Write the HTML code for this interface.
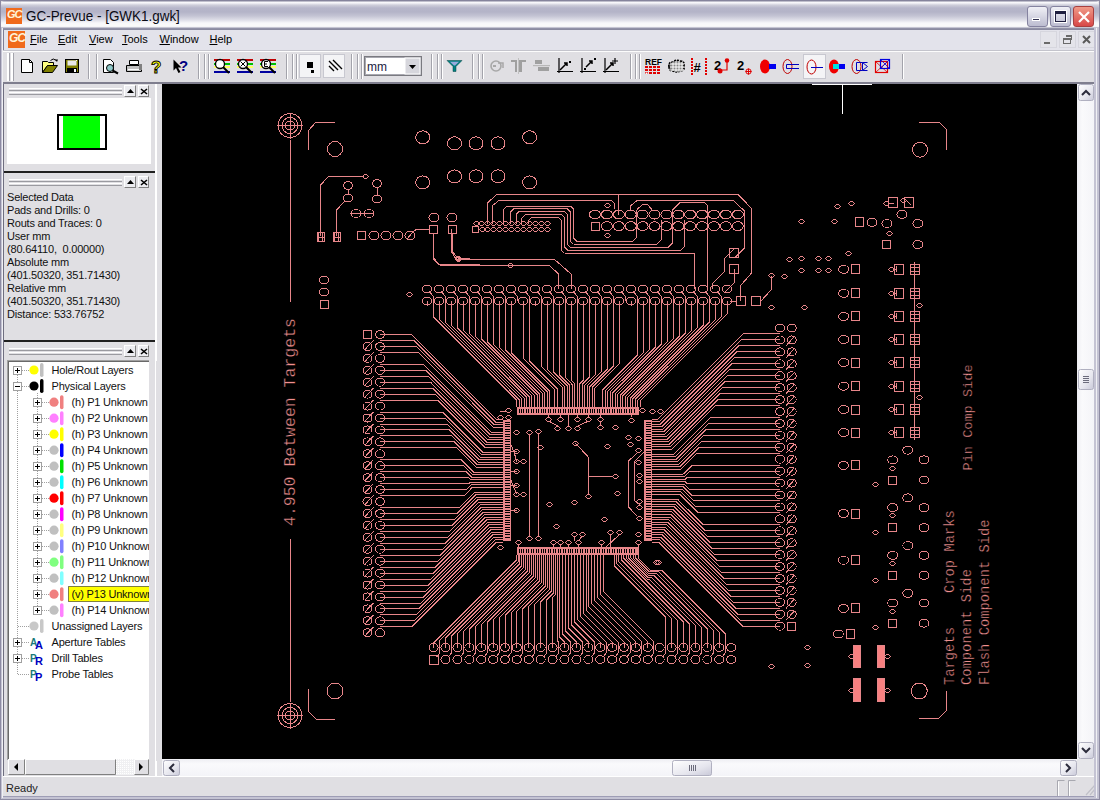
<!DOCTYPE html><html><head><meta charset="utf-8"><style>
*{margin:0;padding:0;box-sizing:border-box}
html,body{width:1100px;height:800px;overflow:hidden;background:#e0dfe3;font-family:"Liberation Sans",sans-serif;font-size:12px;color:#000;position:relative}
.a{position:absolute}
.t{position:absolute;white-space:nowrap;line-height:1}
</style></head><body>
<div class="a" style="left:0;top:0;width:1100px;height:800px;background:#8d8ba3"></div>
<div class="a" style="left:1px;top:1px;width:1098px;height:798px;background:#e0dfe3"></div>
<div class="a" style="left:0;top:0;width:1100px;height:30px;border-radius:7px 7px 0 0;background:linear-gradient(#85849c 0px,#85849c 1px,#fbfbfd 2px,#f4f4f8 3px,#cfcfdb 5px,#b6b6ca 8px,#b4b4c8 12px,#c4c4d4 16px,#dedee8 20px,#f8f8fa 23px,#fafafa 26px,#f0f0f4 27px,#9a9ab0 28px,#8a8aa0 29px,#8a8aa0 30px)"></div>
<div class="a" style="left:6px;top:8px;width:16px;height:16px;background:#f06a1c"><div class="t" style="left:1px;top:1px;font-weight:bold;font-style:italic;font-size:11px;color:#fff3d8;letter-spacing:-1px">GC</div></div>
<div class="t" style="left:26px;top:9px;font-size:14px;color:#0a0a14;transform:scaleX(0.96);transform-origin:0 0">GC-Prevue - [GWK1.gwk]</div>
<div class="a" style="left:1027px;top:6px;width:21px;height:21px;border:1px solid #8583a0;border-radius:3px;background:linear-gradient(#f0f0f6,#bcbcd0)"><div class="a" style="left:4px;top:11px;width:8px;height:3px;background:#303050;border:1px solid #fff"></div></div>
<div class="a" style="left:1050px;top:6px;width:21px;height:21px;border:1px solid #8583a0;border-radius:3px;background:linear-gradient(#f0f0f6,#bcbcd0)"><div class="a" style="left:4px;top:4px;width:11px;height:11px;border:1px solid #202040;border-top-width:3px;box-shadow:0 0 0 1px #fff"></div></div>
<div class="a" style="left:1073px;top:6px;width:21px;height:21px;border:1px solid #a84040;border-radius:3px;background:linear-gradient(#f09a88,#d84848)"><svg class="a" style="left:3px;top:3px" width="14" height="14"><path d="M2 2L12 12M12 2L2 12" stroke="#fff" stroke-width="2.2"/></svg></div>
<div class="a" style="left:3px;top:30px;width:1094px;height:21px;background:#e3e3eb;border-left:1px solid #7f7e96"></div>
<div class="a" style="left:3px;top:50px;width:1094px;height:1px;background:#c4c4cc"></div>
<div class="a" style="left:8px;top:31px;width:17px;height:17px;background:#f06a1c"><div class="t" style="left:1px;top:1px;font-weight:bold;font-style:italic;font-size:12px;color:#fff3d8;letter-spacing:-1px">GC</div></div>
<div class="t" style="left:30px;top:34px;font-size:11px;color:#000"><u>F</u>ile</div>
<div class="t" style="left:58px;top:34px;font-size:11px;color:#000"><u>E</u>dit</div>
<div class="t" style="left:89px;top:34px;font-size:11px;color:#000"><u>V</u>iew</div>
<div class="t" style="left:122px;top:34px;font-size:11px;color:#000"><u>T</u>ools</div>
<div class="t" style="left:159.5px;top:34px;font-size:11px;color:#000"><u>W</u>indow</div>
<div class="t" style="left:209.5px;top:34px;font-size:11px;color:#000"><u>H</u>elp</div>
<div class="a" style="left:1040px;top:31px;width:17px;height:17px;background:#e4e4ea;border:1px solid #d6d6de"></div>
<div class="a" style="left:1059px;top:31px;width:17px;height:17px;background:#e4e4ea;border:1px solid #d6d6de"></div>
<div class="a" style="left:1078px;top:31px;width:17px;height:17px;background:#e4e4ea;border:1px solid #d6d6de"></div>
<div class="a" style="left:1044px;top:42px;width:6px;height:2px;background:#6a6a6a"></div>
<div class="a" style="left:1063px;top:38px;width:8px;height:6px;border:1px solid #6a6a6a;border-top-width:2px"></div>
<div class="a" style="left:1066px;top:35px;width:6px;height:5px;border-top:2px solid #6a6a6a;border-right:1px solid #6a6a6a"></div>
<svg class="a" style="left:1082px;top:35px" width="10" height="10"><path d="M1 1L8 8M8 1L1 8" stroke="#5a5a5a" stroke-width="2"/></svg>
<div class="a" style="left:3px;top:51px;width:1094px;height:1px;background:#fcfcfc"></div>
<div class="a" style="left:3px;top:52px;width:1094px;height:31px;background:#e0dfe3"></div>
<div class="a" style="left:3px;top:82px;width:1094px;height:2px;background:#7f7e8e"></div>
<svg class="a" style="left:0;top:0" width="1100" height="84" viewBox="0 0 1100 84"><rect x="7" y="53" width="2" height="28" fill="#fff"/><rect x="9" y="53" width="1" height="28" fill="#a3a3ab"/><rect x="11" y="53" width="2" height="28" fill="#fff"/><rect x="13" y="53" width="1" height="28" fill="#a3a3ab"/><rect x="88" y="54" width="1" height="25" fill="#a3a3ab"/><rect x="89" y="54" width="1" height="25" fill="#ffffff"/><rect x="198" y="54" width="1" height="25" fill="#a3a3ab"/><rect x="199" y="54" width="1" height="25" fill="#ffffff"/><rect x="286" y="54" width="1" height="25" fill="#a3a3ab"/><rect x="287" y="54" width="1" height="25" fill="#ffffff"/><rect x="351" y="54" width="1" height="25" fill="#a3a3ab"/><rect x="352" y="54" width="1" height="25" fill="#ffffff"/><rect x="431" y="54" width="1" height="25" fill="#a3a3ab"/><rect x="432" y="54" width="1" height="25" fill="#ffffff"/><rect x="472" y="54" width="1" height="25" fill="#a3a3ab"/><rect x="473" y="54" width="1" height="25" fill="#ffffff"/><rect x="630" y="54" width="1" height="25" fill="#a3a3ab"/><rect x="631" y="54" width="1" height="25" fill="#ffffff"/><rect x="902" y="54" width="1" height="25" fill="#a3a3ab"/><rect x="903" y="54" width="1" height="25" fill="#ffffff"/><rect x="96" y="54" width="1" height="25" fill="#a3a3ab"/><rect x="97" y="54" width="1" height="25" fill="#ffffff"/><rect x="204" y="54" width="1" height="25" fill="#a3a3ab"/><rect x="205" y="54" width="1" height="25" fill="#ffffff"/><rect x="208" y="54" width="1" height="25" fill="#a3a3ab"/><rect x="209" y="54" width="1" height="25" fill="#ffffff"/><rect x="292" y="54" width="1" height="25" fill="#a3a3ab"/><rect x="293" y="54" width="1" height="25" fill="#ffffff"/><rect x="296" y="54" width="1" height="25" fill="#a3a3ab"/><rect x="297" y="54" width="1" height="25" fill="#ffffff"/><rect x="357" y="54" width="1" height="25" fill="#a3a3ab"/><rect x="358" y="54" width="1" height="25" fill="#ffffff"/><rect x="361" y="54" width="1" height="25" fill="#a3a3ab"/><rect x="362" y="54" width="1" height="25" fill="#ffffff"/><rect x="437" y="54" width="1" height="25" fill="#a3a3ab"/><rect x="438" y="54" width="1" height="25" fill="#ffffff"/><rect x="441" y="54" width="1" height="25" fill="#a3a3ab"/><rect x="442" y="54" width="1" height="25" fill="#ffffff"/><rect x="478" y="54" width="1" height="25" fill="#a3a3ab"/><rect x="479" y="54" width="1" height="25" fill="#ffffff"/><rect x="482" y="54" width="1" height="25" fill="#a3a3ab"/><rect x="483" y="54" width="1" height="25" fill="#ffffff"/><rect x="635" y="54" width="1" height="25" fill="#a3a3ab"/><rect x="636" y="54" width="1" height="25" fill="#ffffff"/><rect x="639" y="54" width="1" height="25" fill="#a3a3ab"/><rect x="640" y="54" width="1" height="25" fill="#ffffff"/><path d="M21.5 59.5H29.5L32.5 62.5V72.5H21.5Z" fill="#fff" stroke="#000"/><path d="M29.5 59.5V62.5H32.5" fill="none" stroke="#000"/><path d="M42.5 61.5H47.5L48.5 62.5H53.5V65.5H47.5L42.5 72.5Z" fill="#ffff80" stroke="#000"/><path d="M42.5 72.5L47.5 65.5H57.5L52.5 72.5Z" fill="#808000" stroke="#000"/><path d="M50.5 60.5Q53 57.5 56.5 60.5" fill="none" stroke="#000"/><path d="M55 59.5H58L57 62Z" fill="#000"/><rect x="65.5" y="59.5" width="13" height="13" fill="#808000" stroke="#000"/><rect x="67.5" y="60.5" width="9" height="5" fill="#e8e8e8"/><rect x="76" y="60" width="1" height="1" fill="#fff"/><rect x="67" y="68" width="10" height="4.5" fill="#000"/><rect x="74" y="69" width="2" height="3" fill="#fff"/><path d="M103.5 59.5H110.5L113.5 62.5V72.5H103.5Z" fill="#fff" stroke="#000"/><circle cx="110" cy="68" r="3.5" fill="#8fc8c8" stroke="#000"/><path d="M112.5 70.5L118 73.5" stroke="#000" stroke-width="2"/><path d="M129.5 60.5H138.5V64.5H129.5Z" fill="#fff" stroke="#000"/><path d="M126.5 65.5H141.5V71.5H126.5Z" fill="#c0c0c0" stroke="#000"/><rect x="128" y="69" width="12" height="1.2" fill="#fff"/><rect x="139" y="64" width="3" height="6" fill="#808080"/><text x="151" y="73" font-family="Liberation Sans" font-weight="bold" font-size="17" fill="#ffff00" stroke="#000" stroke-width="0.9">?</text><path d="M173.5 59.5V70.5L176 68L178.5 73L180.5 72L178 67.5H181.5Z" fill="#000"/><text x="179" y="71" font-family="Liberation Sans" font-weight="bold" font-size="15" fill="#000080">?</text><rect x="214" y="59" width="16" height="2" fill="#c00000"/><rect x="214" y="63" width="16" height="2" fill="#00c000"/><rect x="214" y="66" width="16" height="2" fill="#ffff60"/><rect x="214" y="71" width="16" height="2" fill="#0000a0"/><circle cx="220" cy="64" r="4.5" fill="#fff" stroke="#000" stroke-width="1.3"/><path d="M223 67L229 73" stroke="#000" stroke-width="2"/><rect x="237" y="59" width="16" height="2" fill="#c00000"/><rect x="237" y="63" width="16" height="2" fill="#00c000"/><rect x="237" y="66" width="16" height="2" fill="#ffff60"/><rect x="237" y="71" width="16" height="2" fill="#0000a0"/><circle cx="243" cy="64" r="4.5" fill="#fff" stroke="#000" stroke-width="1.3"/><path d="M246 67L252 73" stroke="#000" stroke-width="2"/><path d="M240.5 61.5L245.5 66.5M245.5 61.5L240.5 66.5" stroke="#000"/><rect x="260" y="59" width="16" height="2" fill="#c00000"/><rect x="260" y="63" width="16" height="2" fill="#00c000"/><rect x="260" y="66" width="16" height="2" fill="#ffff60"/><rect x="260" y="71" width="16" height="2" fill="#0000a0"/><circle cx="266" cy="64" r="4.5" fill="#fff" stroke="#000" stroke-width="1.3"/><path d="M269 67L275 73" stroke="#000" stroke-width="2"/><path d="M268 61.5H264.5V66.5H268M264.5 64H267" fill="none" stroke="#000"/><rect x="299.5" y="54.5" width="21" height="23" fill="#f4f4f6" stroke="#c8c8d0"/><rect x="323.5" y="54.5" width="21" height="23" fill="#f4f4f6" stroke="#c8c8d0"/><rect x="307" y="62" width="6" height="6" fill="#000"/><rect x="311" y="70" width="3" height="3" fill="#000"/><path d="M329 61L338 70M329 66L334 71M333 60L342 69" stroke="#000" stroke-width="1.4"/><rect x="364.5" y="56.5" width="57" height="19" fill="#fff" stroke="#7a7a80"/><rect x="365.5" y="57.5" width="55" height="17" fill="none" stroke="#a8a8b0"/><rect x="405" y="58" width="15" height="16" fill="#d6d6dc" stroke="#fff"/><path d="M409 65H416L412.5 69Z" fill="#000"/><text x="367" y="70.5" font-family="Liberation Sans" font-size="12" fill="#1a1a40">mm</text><path d="M447 60.5H462L456 66.5V71.5H453V66.5Z" fill="#008080" stroke="#004040" stroke-width="0.5"/><path d="M450 61.8H459L455 65.5H454Z" fill="#9ad"/><circle cx="496" cy="66" r="5" fill="none" stroke="#a8a8a8" stroke-width="1.6"/><path d="M498 63H503V68" fill="none" stroke="#a8a8a8" stroke-width="1.5"/><rect x="493" y="65" width="3" height="2" fill="#a8a8a8"/><path d="M511 60H517V72H515V62H511ZM519 60H526V62H522V72H519Z" fill="#a0a0a0"/><rect x="518" y="58" width="1" height="16" fill="#c0c0c0"/><path d="M535 60H542V64H535ZM538 67H549V71H538Z" fill="#a0a0a0"/><rect x="533" y="65" width="17" height="1.2" fill="#b8b8b8"/><path d="M559 58V73M557 71.5H573" stroke="#000" stroke-width="1.2"/><path d="M560 70L567 63M564 63H567V66" stroke="#000" stroke-width="1.5" fill="none"/><rect x="569" y="61" width="2" height="2" fill="#000"/><path d="M582 58V73M580 71.5H596" stroke="#000" stroke-width="1.2"/><path d="M586 67L592 61M589 61H592V64" stroke="#000" stroke-width="1.5" fill="none"/><rect x="584" y="68" width="2" height="2" fill="#000"/><rect x="594" y="58" width="2" height="2" fill="#000"/><path d="M605 58V73M603 71.5H619" stroke="#000" stroke-width="1.2"/><path d="M606 70L613 63M610 63H613V66" stroke="#000" stroke-width="1.5" fill="none"/><path d="M615 58V64M612 61H618" stroke="#000" stroke-width="1.2"/><text x="645" y="64.5" font-family="Liberation Sans" font-weight="bold" font-size="8.5" fill="#000">REF</text><rect x="645" y="66" width="3" height="2" fill="#e00000"/><rect x="649" y="66" width="3" height="2" fill="#e00000"/><rect x="653" y="66" width="3" height="2" fill="#e00000"/><rect x="657" y="66" width="3" height="2" fill="#e00000"/><rect x="645" y="69" width="3" height="2" fill="#e00000"/><rect x="649" y="69" width="3" height="2" fill="#e00000"/><rect x="653" y="69" width="3" height="2" fill="#e00000"/><rect x="657" y="69" width="3" height="2" fill="#e00000"/><rect x="645" y="72" width="3" height="2" fill="#e00000"/><rect x="649" y="72" width="3" height="2" fill="#e00000"/><rect x="653" y="72" width="3" height="2" fill="#e00000"/><rect x="657" y="72" width="3" height="2" fill="#e00000"/><rect x="645.5" y="72.5" width="2" height="1.5" fill="#fff"/><path d="M669 67Q668 62 673 62Q676 59 680 61Q685 61 684 66Q685 71 680 71Q677 73 673 71Q669 71 669 67Z" fill="#888" stroke="#000" stroke-width="1.6" stroke-dasharray="2 1"/><path d="M673 62V71M676 61V72M679 61V72M682 62V71M670 64H684M670 67H684M670 70H684" stroke="#fff" stroke-width="1"/><rect x="691" y="58" width="2" height="2" fill="#e00000"/><rect x="705" y="58" width="2" height="2" fill="#e00000"/><rect x="691" y="61" width="2" height="2" fill="#e00000"/><rect x="705" y="61" width="2" height="2" fill="#e00000"/><rect x="691" y="64" width="2" height="2" fill="#e00000"/><rect x="705" y="64" width="2" height="2" fill="#e00000"/><rect x="691" y="67" width="2" height="2" fill="#e00000"/><rect x="705" y="67" width="2" height="2" fill="#e00000"/><rect x="691" y="70" width="2" height="2" fill="#e00000"/><rect x="705" y="70" width="2" height="2" fill="#e00000"/><rect x="691" y="73" width="2" height="2" fill="#e00000"/><rect x="705" y="73" width="2" height="2" fill="#e00000"/><text x="693.5" y="71.5" font-family="Liberation Sans" font-weight="bold" font-size="13" fill="#000">#</text><text x="714" y="70" font-family="Liberation Sans" font-weight="bold" font-size="13" fill="#000">2</text><circle cx="727" cy="60.5" r="2.3" fill="#e00000"/><circle cx="720" cy="71" r="2.5" fill="#e00000"/><path d="M727 61V70H721" fill="none" stroke="#e00000" stroke-width="1.2"/><text x="737" y="70" font-family="Liberation Sans" font-weight="bold" font-size="13" fill="#000">2</text><circle cx="748.5" cy="71.5" r="2.6" fill="none" stroke="#e00000" stroke-width="1"/><path d="M748.5 68.5V74.5M745.5 71.5H751.5" stroke="#e00000" stroke-width="1"/><ellipse cx="765" cy="66.5" rx="5" ry="7" fill="#f00000"/><rect x="769" y="64" width="7" height="5" fill="#0000f0"/><ellipse cx="787.5" cy="66.5" rx="4.5" ry="7" fill="none" stroke="#c00000"/><path d="M786.5 64.5H799M786.5 68.5H799M786.5 64.5V68.5" fill="none" stroke="#0000c0"/><rect x="803.5" y="54.5" width="22" height="24" fill="#f4f4f6" stroke="#c8c8d0"/><ellipse cx="811.5" cy="67" rx="4.5" ry="7" fill="none" stroke="#c00000"/><path d="M811 67.5H823" stroke="#0000c0"/><ellipse cx="834" cy="66.5" rx="5" ry="7" fill="#f00000"/><rect x="833" y="64" width="6" height="5" fill="#00e0e0"/><rect x="839" y="64" width="6" height="5" fill="#0000f0"/><ellipse cx="856.5" cy="66.5" rx="4.5" ry="7" fill="none" stroke="#c00000"/><path d="M856.5 62.5H862.5V70.5H856.5ZM862.5 62.5L867.5 66.5L862.5 70.5M862.5 62.5H867.5M862.5 70.5H867.5" fill="none" stroke="#0000c0"/><rect x="875.5" y="61.5" width="12" height="11" fill="none" stroke="#e00000" stroke-width="1.2"/><path d="M875.5 61.5L887.5 72.5M887.5 61.5L875.5 72.5" stroke="#e00000" stroke-width="0.8"/><rect x="880.5" y="59.5" width="9" height="9" fill="none" stroke="#0000e0" stroke-width="1.2"/><path d="M880.5 59.5L889.5 68.5M889.5 59.5L880.5 68.5" stroke="#0000e0" stroke-width="0.8"/></svg>
<div class="a" style="left:3px;top:84px;width:1px;height:693px;background:#6f6e80"></div>
<div class="a" style="left:155px;top:84px;width:2px;height:693px;background:#fff"></div>
<div class="a" style="left:9px;top:88px;width:113px;height:3px;border-top:1px solid #fff;border-bottom:1px solid #9a9aa0"></div><div class="a" style="left:9px;top:92px;width:113px;height:3px;border-top:1px solid #fff;border-bottom:1px solid #9a9aa0"></div><div class="a" style="left:124px;top:85px;width:12px;height:12px;background:#ececf0;border:1px solid;border-color:#fff #808080 #808080 #fff"><svg class="a" style="left:2px;top:3px" width="7" height="5"><path d="M0 4L3.5 0L7 4Z" fill="#000"/></svg></div><div class="a" style="left:138px;top:85px;width:11px;height:12px;background:#ececf0;border:1px solid;border-color:#fff #808080 #808080 #fff"><svg class="a" style="left:1px;top:2px" width="8" height="7"><path d="M1 1L7 6M7 1L1 6" stroke="#000" stroke-width="1.6"/></svg></div>
<div class="a" style="left:7px;top:98px;width:144px;height:66px;background:#fff"></div>
<div class="a" style="left:57px;top:114px;width:50px;height:36px;border:2px solid #000;background:#fff"></div>
<div class="a" style="left:63px;top:116px;width:37px;height:32px;background:#00ff00"></div>
<div class="a" style="left:4px;top:171px;width:151px;height:2px;background:#202020"></div>
<div class="a" style="left:9px;top:179px;width:113px;height:3px;border-top:1px solid #fff;border-bottom:1px solid #9a9aa0"></div><div class="a" style="left:9px;top:183px;width:113px;height:3px;border-top:1px solid #fff;border-bottom:1px solid #9a9aa0"></div><div class="a" style="left:124px;top:176px;width:12px;height:12px;background:#ececf0;border:1px solid;border-color:#fff #808080 #808080 #fff"><svg class="a" style="left:2px;top:3px" width="7" height="5"><path d="M0 4L3.5 0L7 4Z" fill="#000"/></svg></div><div class="a" style="left:138px;top:176px;width:11px;height:12px;background:#ececf0;border:1px solid;border-color:#fff #808080 #808080 #fff"><svg class="a" style="left:1px;top:2px" width="8" height="7"><path d="M1 1L7 6M7 1L1 6" stroke="#000" stroke-width="1.6"/></svg></div>
<div class="t" style="left:7px;top:191.5px;font-size:11px;letter-spacing:-0.2px;color:#111;white-space:pre">Selected Data</div>
<div class="t" style="left:7px;top:204.5px;font-size:11px;letter-spacing:-0.2px;color:#111;white-space:pre">Pads and Drills: 0</div>
<div class="t" style="left:7px;top:217.5px;font-size:11px;letter-spacing:-0.2px;color:#111;white-space:pre">Routs and Traces: 0</div>
<div class="t" style="left:7px;top:230.5px;font-size:11px;letter-spacing:-0.2px;color:#111;white-space:pre">User mm</div>
<div class="t" style="left:7px;top:243.5px;font-size:11px;letter-spacing:-0.2px;color:#111;white-space:pre">(80.64110,  0.00000)</div>
<div class="t" style="left:7px;top:256.5px;font-size:11px;letter-spacing:-0.2px;color:#111;white-space:pre">Absolute mm</div>
<div class="t" style="left:7px;top:269.5px;font-size:11px;letter-spacing:-0.2px;color:#111;white-space:pre">(401.50320, 351.71430)</div>
<div class="t" style="left:7px;top:282.5px;font-size:11px;letter-spacing:-0.2px;color:#111;white-space:pre">Relative mm</div>
<div class="t" style="left:7px;top:295.5px;font-size:11px;letter-spacing:-0.2px;color:#111;white-space:pre">(401.50320, 351.71430)</div>
<div class="t" style="left:7px;top:308.5px;font-size:11px;letter-spacing:-0.2px;color:#111;white-space:pre">Distance: 533.76752</div>
<div class="a" style="left:4px;top:340px;width:151px;height:2px;background:#202020"></div>
<div class="a" style="left:9px;top:348px;width:113px;height:3px;border-top:1px solid #fff;border-bottom:1px solid #9a9aa0"></div><div class="a" style="left:9px;top:352px;width:113px;height:3px;border-top:1px solid #fff;border-bottom:1px solid #9a9aa0"></div><div class="a" style="left:124px;top:345px;width:12px;height:12px;background:#ececf0;border:1px solid;border-color:#fff #808080 #808080 #fff"><svg class="a" style="left:2px;top:3px" width="7" height="5"><path d="M0 4L3.5 0L7 4Z" fill="#000"/></svg></div><div class="a" style="left:138px;top:345px;width:11px;height:12px;background:#ececf0;border:1px solid;border-color:#fff #808080 #808080 #fff"><svg class="a" style="left:1px;top:2px" width="8" height="7"><path d="M1 1L7 6M7 1L1 6" stroke="#000" stroke-width="1.6"/></svg></div>
<svg class="a" style="left:0;top:0" width="162" height="800" viewBox="0 0 162 800"><defs><clipPath id="tc"><rect x="0" y="0" width="149" height="800"/></clipPath></defs><g clip-path="url(#tc)"><rect x="7" y="360" width="144" height="400" fill="#fff"/><rect x="7" y="360" width="144" height="1" fill="#a0a0a0"/><rect x="7" y="360" width="1" height="400" fill="#a0a0a0"/><rect x="8" y="361" width="143" height="1" fill="#696969"/><rect x="8" y="361" width="1" height="399" fill="#696969"/><rect x="17" y="375" width="1" height="1" fill="#a0a0a0"/><rect x="17" y="377" width="1" height="1" fill="#a0a0a0"/><rect x="17" y="379" width="1" height="1" fill="#a0a0a0"/><rect x="17" y="381" width="1" height="1" fill="#a0a0a0"/><rect x="17" y="383" width="1" height="1" fill="#a0a0a0"/><rect x="17" y="385" width="1" height="1" fill="#a0a0a0"/><rect x="17" y="387" width="1" height="1" fill="#a0a0a0"/><rect x="17" y="389" width="1" height="1" fill="#a0a0a0"/><rect x="17" y="391" width="1" height="1" fill="#a0a0a0"/><rect x="17" y="393" width="1" height="1" fill="#a0a0a0"/><rect x="17" y="395" width="1" height="1" fill="#a0a0a0"/><rect x="17" y="397" width="1" height="1" fill="#a0a0a0"/><rect x="17" y="399" width="1" height="1" fill="#a0a0a0"/><rect x="17" y="401" width="1" height="1" fill="#a0a0a0"/><rect x="17" y="403" width="1" height="1" fill="#a0a0a0"/><rect x="17" y="405" width="1" height="1" fill="#a0a0a0"/><rect x="17" y="407" width="1" height="1" fill="#a0a0a0"/><rect x="17" y="409" width="1" height="1" fill="#a0a0a0"/><rect x="17" y="411" width="1" height="1" fill="#a0a0a0"/><rect x="17" y="413" width="1" height="1" fill="#a0a0a0"/><rect x="17" y="415" width="1" height="1" fill="#a0a0a0"/><rect x="17" y="417" width="1" height="1" fill="#a0a0a0"/><rect x="17" y="419" width="1" height="1" fill="#a0a0a0"/><rect x="17" y="421" width="1" height="1" fill="#a0a0a0"/><rect x="17" y="423" width="1" height="1" fill="#a0a0a0"/><rect x="17" y="425" width="1" height="1" fill="#a0a0a0"/><rect x="17" y="427" width="1" height="1" fill="#a0a0a0"/><rect x="17" y="429" width="1" height="1" fill="#a0a0a0"/><rect x="17" y="431" width="1" height="1" fill="#a0a0a0"/><rect x="17" y="433" width="1" height="1" fill="#a0a0a0"/><rect x="17" y="435" width="1" height="1" fill="#a0a0a0"/><rect x="17" y="437" width="1" height="1" fill="#a0a0a0"/><rect x="17" y="439" width="1" height="1" fill="#a0a0a0"/><rect x="17" y="441" width="1" height="1" fill="#a0a0a0"/><rect x="17" y="443" width="1" height="1" fill="#a0a0a0"/><rect x="17" y="445" width="1" height="1" fill="#a0a0a0"/><rect x="17" y="447" width="1" height="1" fill="#a0a0a0"/><rect x="17" y="449" width="1" height="1" fill="#a0a0a0"/><rect x="17" y="451" width="1" height="1" fill="#a0a0a0"/><rect x="17" y="453" width="1" height="1" fill="#a0a0a0"/><rect x="17" y="455" width="1" height="1" fill="#a0a0a0"/><rect x="17" y="457" width="1" height="1" fill="#a0a0a0"/><rect x="17" y="459" width="1" height="1" fill="#a0a0a0"/><rect x="17" y="461" width="1" height="1" fill="#a0a0a0"/><rect x="17" y="463" width="1" height="1" fill="#a0a0a0"/><rect x="17" y="465" width="1" height="1" fill="#a0a0a0"/><rect x="17" y="467" width="1" height="1" fill="#a0a0a0"/><rect x="17" y="469" width="1" height="1" fill="#a0a0a0"/><rect x="17" y="471" width="1" height="1" fill="#a0a0a0"/><rect x="17" y="473" width="1" height="1" fill="#a0a0a0"/><rect x="17" y="475" width="1" height="1" fill="#a0a0a0"/><rect x="17" y="477" width="1" height="1" fill="#a0a0a0"/><rect x="17" y="479" width="1" height="1" fill="#a0a0a0"/><rect x="17" y="481" width="1" height="1" fill="#a0a0a0"/><rect x="17" y="483" width="1" height="1" fill="#a0a0a0"/><rect x="17" y="485" width="1" height="1" fill="#a0a0a0"/><rect x="17" y="487" width="1" height="1" fill="#a0a0a0"/><rect x="17" y="489" width="1" height="1" fill="#a0a0a0"/><rect x="17" y="491" width="1" height="1" fill="#a0a0a0"/><rect x="17" y="493" width="1" height="1" fill="#a0a0a0"/><rect x="17" y="495" width="1" height="1" fill="#a0a0a0"/><rect x="17" y="497" width="1" height="1" fill="#a0a0a0"/><rect x="17" y="499" width="1" height="1" fill="#a0a0a0"/><rect x="17" y="501" width="1" height="1" fill="#a0a0a0"/><rect x="17" y="503" width="1" height="1" fill="#a0a0a0"/><rect x="17" y="505" width="1" height="1" fill="#a0a0a0"/><rect x="17" y="507" width="1" height="1" fill="#a0a0a0"/><rect x="17" y="509" width="1" height="1" fill="#a0a0a0"/><rect x="17" y="511" width="1" height="1" fill="#a0a0a0"/><rect x="17" y="513" width="1" height="1" fill="#a0a0a0"/><rect x="17" y="515" width="1" height="1" fill="#a0a0a0"/><rect x="17" y="517" width="1" height="1" fill="#a0a0a0"/><rect x="17" y="519" width="1" height="1" fill="#a0a0a0"/><rect x="17" y="521" width="1" height="1" fill="#a0a0a0"/><rect x="17" y="523" width="1" height="1" fill="#a0a0a0"/><rect x="17" y="525" width="1" height="1" fill="#a0a0a0"/><rect x="17" y="527" width="1" height="1" fill="#a0a0a0"/><rect x="17" y="529" width="1" height="1" fill="#a0a0a0"/><rect x="17" y="531" width="1" height="1" fill="#a0a0a0"/><rect x="17" y="533" width="1" height="1" fill="#a0a0a0"/><rect x="17" y="535" width="1" height="1" fill="#a0a0a0"/><rect x="17" y="537" width="1" height="1" fill="#a0a0a0"/><rect x="17" y="539" width="1" height="1" fill="#a0a0a0"/><rect x="17" y="541" width="1" height="1" fill="#a0a0a0"/><rect x="17" y="543" width="1" height="1" fill="#a0a0a0"/><rect x="17" y="545" width="1" height="1" fill="#a0a0a0"/><rect x="17" y="547" width="1" height="1" fill="#a0a0a0"/><rect x="17" y="549" width="1" height="1" fill="#a0a0a0"/><rect x="17" y="551" width="1" height="1" fill="#a0a0a0"/><rect x="17" y="553" width="1" height="1" fill="#a0a0a0"/><rect x="17" y="555" width="1" height="1" fill="#a0a0a0"/><rect x="17" y="557" width="1" height="1" fill="#a0a0a0"/><rect x="17" y="559" width="1" height="1" fill="#a0a0a0"/><rect x="17" y="561" width="1" height="1" fill="#a0a0a0"/><rect x="17" y="563" width="1" height="1" fill="#a0a0a0"/><rect x="17" y="565" width="1" height="1" fill="#a0a0a0"/><rect x="17" y="567" width="1" height="1" fill="#a0a0a0"/><rect x="17" y="569" width="1" height="1" fill="#a0a0a0"/><rect x="17" y="571" width="1" height="1" fill="#a0a0a0"/><rect x="17" y="573" width="1" height="1" fill="#a0a0a0"/><rect x="17" y="575" width="1" height="1" fill="#a0a0a0"/><rect x="17" y="577" width="1" height="1" fill="#a0a0a0"/><rect x="17" y="579" width="1" height="1" fill="#a0a0a0"/><rect x="17" y="581" width="1" height="1" fill="#a0a0a0"/><rect x="17" y="583" width="1" height="1" fill="#a0a0a0"/><rect x="17" y="585" width="1" height="1" fill="#a0a0a0"/><rect x="17" y="587" width="1" height="1" fill="#a0a0a0"/><rect x="17" y="589" width="1" height="1" fill="#a0a0a0"/><rect x="17" y="591" width="1" height="1" fill="#a0a0a0"/><rect x="17" y="593" width="1" height="1" fill="#a0a0a0"/><rect x="17" y="595" width="1" height="1" fill="#a0a0a0"/><rect x="17" y="597" width="1" height="1" fill="#a0a0a0"/><rect x="17" y="599" width="1" height="1" fill="#a0a0a0"/><rect x="17" y="601" width="1" height="1" fill="#a0a0a0"/><rect x="17" y="603" width="1" height="1" fill="#a0a0a0"/><rect x="17" y="605" width="1" height="1" fill="#a0a0a0"/><rect x="17" y="607" width="1" height="1" fill="#a0a0a0"/><rect x="17" y="609" width="1" height="1" fill="#a0a0a0"/><rect x="17" y="611" width="1" height="1" fill="#a0a0a0"/><rect x="17" y="613" width="1" height="1" fill="#a0a0a0"/><rect x="17" y="615" width="1" height="1" fill="#a0a0a0"/><rect x="17" y="617" width="1" height="1" fill="#a0a0a0"/><rect x="17" y="619" width="1" height="1" fill="#a0a0a0"/><rect x="17" y="621" width="1" height="1" fill="#a0a0a0"/><rect x="17" y="623" width="1" height="1" fill="#a0a0a0"/><rect x="17" y="625" width="1" height="1" fill="#a0a0a0"/><rect x="17" y="627" width="1" height="1" fill="#a0a0a0"/><rect x="17" y="629" width="1" height="1" fill="#a0a0a0"/><rect x="17" y="631" width="1" height="1" fill="#a0a0a0"/><rect x="17" y="633" width="1" height="1" fill="#a0a0a0"/><rect x="17" y="635" width="1" height="1" fill="#a0a0a0"/><rect x="17" y="637" width="1" height="1" fill="#a0a0a0"/><rect x="17" y="639" width="1" height="1" fill="#a0a0a0"/><rect x="17" y="641" width="1" height="1" fill="#a0a0a0"/><rect x="17" y="643" width="1" height="1" fill="#a0a0a0"/><rect x="17" y="645" width="1" height="1" fill="#a0a0a0"/><rect x="17" y="647" width="1" height="1" fill="#a0a0a0"/><rect x="17" y="649" width="1" height="1" fill="#a0a0a0"/><rect x="17" y="651" width="1" height="1" fill="#a0a0a0"/><rect x="17" y="653" width="1" height="1" fill="#a0a0a0"/><rect x="17" y="655" width="1" height="1" fill="#a0a0a0"/><rect x="17" y="657" width="1" height="1" fill="#a0a0a0"/><rect x="17" y="659" width="1" height="1" fill="#a0a0a0"/><rect x="17" y="661" width="1" height="1" fill="#a0a0a0"/><rect x="17" y="663" width="1" height="1" fill="#a0a0a0"/><rect x="17" y="665" width="1" height="1" fill="#a0a0a0"/><rect x="17" y="667" width="1" height="1" fill="#a0a0a0"/><rect x="17" y="669" width="1" height="1" fill="#a0a0a0"/><rect x="17" y="671" width="1" height="1" fill="#a0a0a0"/><rect x="17" y="673" width="1" height="1" fill="#a0a0a0"/><rect x="37" y="393" width="1" height="1" fill="#a0a0a0"/><rect x="37" y="395" width="1" height="1" fill="#a0a0a0"/><rect x="37" y="397" width="1" height="1" fill="#a0a0a0"/><rect x="37" y="399" width="1" height="1" fill="#a0a0a0"/><rect x="37" y="401" width="1" height="1" fill="#a0a0a0"/><rect x="37" y="403" width="1" height="1" fill="#a0a0a0"/><rect x="37" y="405" width="1" height="1" fill="#a0a0a0"/><rect x="37" y="407" width="1" height="1" fill="#a0a0a0"/><rect x="37" y="409" width="1" height="1" fill="#a0a0a0"/><rect x="37" y="411" width="1" height="1" fill="#a0a0a0"/><rect x="37" y="413" width="1" height="1" fill="#a0a0a0"/><rect x="37" y="415" width="1" height="1" fill="#a0a0a0"/><rect x="37" y="417" width="1" height="1" fill="#a0a0a0"/><rect x="37" y="419" width="1" height="1" fill="#a0a0a0"/><rect x="37" y="421" width="1" height="1" fill="#a0a0a0"/><rect x="37" y="423" width="1" height="1" fill="#a0a0a0"/><rect x="37" y="425" width="1" height="1" fill="#a0a0a0"/><rect x="37" y="427" width="1" height="1" fill="#a0a0a0"/><rect x="37" y="429" width="1" height="1" fill="#a0a0a0"/><rect x="37" y="431" width="1" height="1" fill="#a0a0a0"/><rect x="37" y="433" width="1" height="1" fill="#a0a0a0"/><rect x="37" y="435" width="1" height="1" fill="#a0a0a0"/><rect x="37" y="437" width="1" height="1" fill="#a0a0a0"/><rect x="37" y="439" width="1" height="1" fill="#a0a0a0"/><rect x="37" y="441" width="1" height="1" fill="#a0a0a0"/><rect x="37" y="443" width="1" height="1" fill="#a0a0a0"/><rect x="37" y="445" width="1" height="1" fill="#a0a0a0"/><rect x="37" y="447" width="1" height="1" fill="#a0a0a0"/><rect x="37" y="449" width="1" height="1" fill="#a0a0a0"/><rect x="37" y="451" width="1" height="1" fill="#a0a0a0"/><rect x="37" y="453" width="1" height="1" fill="#a0a0a0"/><rect x="37" y="455" width="1" height="1" fill="#a0a0a0"/><rect x="37" y="457" width="1" height="1" fill="#a0a0a0"/><rect x="37" y="459" width="1" height="1" fill="#a0a0a0"/><rect x="37" y="461" width="1" height="1" fill="#a0a0a0"/><rect x="37" y="463" width="1" height="1" fill="#a0a0a0"/><rect x="37" y="465" width="1" height="1" fill="#a0a0a0"/><rect x="37" y="467" width="1" height="1" fill="#a0a0a0"/><rect x="37" y="469" width="1" height="1" fill="#a0a0a0"/><rect x="37" y="471" width="1" height="1" fill="#a0a0a0"/><rect x="37" y="473" width="1" height="1" fill="#a0a0a0"/><rect x="37" y="475" width="1" height="1" fill="#a0a0a0"/><rect x="37" y="477" width="1" height="1" fill="#a0a0a0"/><rect x="37" y="479" width="1" height="1" fill="#a0a0a0"/><rect x="37" y="481" width="1" height="1" fill="#a0a0a0"/><rect x="37" y="483" width="1" height="1" fill="#a0a0a0"/><rect x="37" y="485" width="1" height="1" fill="#a0a0a0"/><rect x="37" y="487" width="1" height="1" fill="#a0a0a0"/><rect x="37" y="489" width="1" height="1" fill="#a0a0a0"/><rect x="37" y="491" width="1" height="1" fill="#a0a0a0"/><rect x="37" y="493" width="1" height="1" fill="#a0a0a0"/><rect x="37" y="495" width="1" height="1" fill="#a0a0a0"/><rect x="37" y="497" width="1" height="1" fill="#a0a0a0"/><rect x="37" y="499" width="1" height="1" fill="#a0a0a0"/><rect x="37" y="501" width="1" height="1" fill="#a0a0a0"/><rect x="37" y="503" width="1" height="1" fill="#a0a0a0"/><rect x="37" y="505" width="1" height="1" fill="#a0a0a0"/><rect x="37" y="507" width="1" height="1" fill="#a0a0a0"/><rect x="37" y="509" width="1" height="1" fill="#a0a0a0"/><rect x="37" y="511" width="1" height="1" fill="#a0a0a0"/><rect x="37" y="513" width="1" height="1" fill="#a0a0a0"/><rect x="37" y="515" width="1" height="1" fill="#a0a0a0"/><rect x="37" y="517" width="1" height="1" fill="#a0a0a0"/><rect x="37" y="519" width="1" height="1" fill="#a0a0a0"/><rect x="37" y="521" width="1" height="1" fill="#a0a0a0"/><rect x="37" y="523" width="1" height="1" fill="#a0a0a0"/><rect x="37" y="525" width="1" height="1" fill="#a0a0a0"/><rect x="37" y="527" width="1" height="1" fill="#a0a0a0"/><rect x="37" y="529" width="1" height="1" fill="#a0a0a0"/><rect x="37" y="531" width="1" height="1" fill="#a0a0a0"/><rect x="37" y="533" width="1" height="1" fill="#a0a0a0"/><rect x="37" y="535" width="1" height="1" fill="#a0a0a0"/><rect x="37" y="537" width="1" height="1" fill="#a0a0a0"/><rect x="37" y="539" width="1" height="1" fill="#a0a0a0"/><rect x="37" y="541" width="1" height="1" fill="#a0a0a0"/><rect x="37" y="543" width="1" height="1" fill="#a0a0a0"/><rect x="37" y="545" width="1" height="1" fill="#a0a0a0"/><rect x="37" y="547" width="1" height="1" fill="#a0a0a0"/><rect x="37" y="549" width="1" height="1" fill="#a0a0a0"/><rect x="37" y="551" width="1" height="1" fill="#a0a0a0"/><rect x="37" y="553" width="1" height="1" fill="#a0a0a0"/><rect x="37" y="555" width="1" height="1" fill="#a0a0a0"/><rect x="37" y="557" width="1" height="1" fill="#a0a0a0"/><rect x="37" y="559" width="1" height="1" fill="#a0a0a0"/><rect x="37" y="561" width="1" height="1" fill="#a0a0a0"/><rect x="37" y="563" width="1" height="1" fill="#a0a0a0"/><rect x="37" y="565" width="1" height="1" fill="#a0a0a0"/><rect x="37" y="567" width="1" height="1" fill="#a0a0a0"/><rect x="37" y="569" width="1" height="1" fill="#a0a0a0"/><rect x="37" y="571" width="1" height="1" fill="#a0a0a0"/><rect x="37" y="573" width="1" height="1" fill="#a0a0a0"/><rect x="37" y="575" width="1" height="1" fill="#a0a0a0"/><rect x="37" y="577" width="1" height="1" fill="#a0a0a0"/><rect x="37" y="579" width="1" height="1" fill="#a0a0a0"/><rect x="37" y="581" width="1" height="1" fill="#a0a0a0"/><rect x="37" y="583" width="1" height="1" fill="#a0a0a0"/><rect x="37" y="585" width="1" height="1" fill="#a0a0a0"/><rect x="37" y="587" width="1" height="1" fill="#a0a0a0"/><rect x="37" y="589" width="1" height="1" fill="#a0a0a0"/><rect x="37" y="591" width="1" height="1" fill="#a0a0a0"/><rect x="37" y="593" width="1" height="1" fill="#a0a0a0"/><rect x="37" y="595" width="1" height="1" fill="#a0a0a0"/><rect x="37" y="597" width="1" height="1" fill="#a0a0a0"/><rect x="37" y="599" width="1" height="1" fill="#a0a0a0"/><rect x="37" y="601" width="1" height="1" fill="#a0a0a0"/><rect x="37" y="603" width="1" height="1" fill="#a0a0a0"/><rect x="37" y="605" width="1" height="1" fill="#a0a0a0"/><rect x="37" y="607" width="1" height="1" fill="#a0a0a0"/><rect x="37" y="609" width="1" height="1" fill="#a0a0a0"/><rect x="13.5" y="366.5" width="8" height="8" fill="#fff" stroke="#a0a0a0"/><rect x="15" y="370" width="5" height="1" fill="#000"/><rect x="17" y="368" width="1" height="5" fill="#000"/><rect x="22" y="370" width="1" height="1" fill="#a0a0a0"/><rect x="24" y="370" width="1" height="1" fill="#a0a0a0"/><rect x="26" y="370" width="1" height="1" fill="#a0a0a0"/><rect x="28" y="370" width="1" height="1" fill="#a0a0a0"/><circle cx="34" cy="370.0" r="4.6" fill="#ffff00"/><rect x="40" y="363.0" width="3.5" height="14" rx="1.7" fill="#c0c0c0"/><text x="51.5" y="374.0" font-family="Liberation Sans" font-size="11" letter-spacing="-0.2" fill="#111">Hole/Rout Layers</text><rect x="13.5" y="382.5" width="8" height="8" fill="#fff" stroke="#a0a0a0"/><rect x="15" y="386" width="5" height="1" fill="#000"/><rect x="22" y="386" width="1" height="1" fill="#a0a0a0"/><rect x="24" y="386" width="1" height="1" fill="#a0a0a0"/><rect x="26" y="386" width="1" height="1" fill="#a0a0a0"/><rect x="28" y="386" width="1" height="1" fill="#a0a0a0"/><circle cx="34" cy="386.0" r="4.6" fill="#000"/><rect x="40" y="379.0" width="3.5" height="14" rx="1.7" fill="#000"/><text x="51.5" y="390.0" font-family="Liberation Sans" font-size="11" letter-spacing="-0.2" fill="#111">Physical Layers</text><rect x="33.5" y="398.5" width="8" height="8" fill="#fff" stroke="#a0a0a0"/><rect x="35" y="402" width="5" height="1" fill="#000"/><rect x="37" y="400" width="1" height="5" fill="#000"/><rect x="42" y="402" width="1" height="1" fill="#a0a0a0"/><rect x="44" y="402" width="1" height="1" fill="#a0a0a0"/><rect x="46" y="402" width="1" height="1" fill="#a0a0a0"/><rect x="48" y="402" width="1" height="1" fill="#a0a0a0"/><circle cx="54" cy="402.2" r="4.6" fill="#f08080"/><rect x="60" y="395.2" width="3.5" height="14" rx="1.7" fill="#f08080"/><text x="71.5" y="406.2" font-family="Liberation Sans" font-size="11" letter-spacing="-0.2" fill="#111">(h) P1 Unknown</text><rect x="33.5" y="414.5" width="8" height="8" fill="#fff" stroke="#a0a0a0"/><rect x="35" y="418" width="5" height="1" fill="#000"/><rect x="37" y="416" width="1" height="5" fill="#000"/><rect x="42" y="418" width="1" height="1" fill="#a0a0a0"/><rect x="44" y="418" width="1" height="1" fill="#a0a0a0"/><rect x="46" y="418" width="1" height="1" fill="#a0a0a0"/><rect x="48" y="418" width="1" height="1" fill="#a0a0a0"/><circle cx="54" cy="418.2" r="4.6" fill="#ff80ff"/><rect x="60" y="411.2" width="3.5" height="14" rx="1.7" fill="#ff80ff"/><text x="71.5" y="422.2" font-family="Liberation Sans" font-size="11" letter-spacing="-0.2" fill="#111">(h) P2 Unknown</text><rect x="33.5" y="430.5" width="8" height="8" fill="#fff" stroke="#a0a0a0"/><rect x="35" y="434" width="5" height="1" fill="#000"/><rect x="37" y="432" width="1" height="5" fill="#000"/><rect x="42" y="434" width="1" height="1" fill="#a0a0a0"/><rect x="44" y="434" width="1" height="1" fill="#a0a0a0"/><rect x="46" y="434" width="1" height="1" fill="#a0a0a0"/><rect x="48" y="434" width="1" height="1" fill="#a0a0a0"/><circle cx="54" cy="434.2" r="4.6" fill="#ffff00"/><rect x="60" y="427.2" width="3.5" height="14" rx="1.7" fill="#ffff00"/><text x="71.5" y="438.2" font-family="Liberation Sans" font-size="11" letter-spacing="-0.2" fill="#111">(h) P3 Unknown</text><rect x="33.5" y="446.5" width="8" height="8" fill="#fff" stroke="#a0a0a0"/><rect x="35" y="450" width="5" height="1" fill="#000"/><rect x="37" y="448" width="1" height="5" fill="#000"/><rect x="42" y="450" width="1" height="1" fill="#a0a0a0"/><rect x="44" y="450" width="1" height="1" fill="#a0a0a0"/><rect x="46" y="450" width="1" height="1" fill="#a0a0a0"/><rect x="48" y="450" width="1" height="1" fill="#a0a0a0"/><circle cx="54" cy="450.2" r="4.6" fill="#c0c0c0"/><rect x="60" y="443.2" width="3.5" height="14" rx="1.7" fill="#0000ff"/><text x="71.5" y="454.2" font-family="Liberation Sans" font-size="11" letter-spacing="-0.2" fill="#111">(h) P4 Unknown</text><rect x="33.5" y="462.5" width="8" height="8" fill="#fff" stroke="#a0a0a0"/><rect x="35" y="466" width="5" height="1" fill="#000"/><rect x="37" y="464" width="1" height="5" fill="#000"/><rect x="42" y="466" width="1" height="1" fill="#a0a0a0"/><rect x="44" y="466" width="1" height="1" fill="#a0a0a0"/><rect x="46" y="466" width="1" height="1" fill="#a0a0a0"/><rect x="48" y="466" width="1" height="1" fill="#a0a0a0"/><circle cx="54" cy="466.2" r="4.6" fill="#c0c0c0"/><rect x="60" y="459.2" width="3.5" height="14" rx="1.7" fill="#00e000"/><text x="71.5" y="470.2" font-family="Liberation Sans" font-size="11" letter-spacing="-0.2" fill="#111">(h) P5 Unknown</text><rect x="33.5" y="478.5" width="8" height="8" fill="#fff" stroke="#a0a0a0"/><rect x="35" y="482" width="5" height="1" fill="#000"/><rect x="37" y="480" width="1" height="5" fill="#000"/><rect x="42" y="482" width="1" height="1" fill="#a0a0a0"/><rect x="44" y="482" width="1" height="1" fill="#a0a0a0"/><rect x="46" y="482" width="1" height="1" fill="#a0a0a0"/><rect x="48" y="482" width="1" height="1" fill="#a0a0a0"/><circle cx="54" cy="482.2" r="4.6" fill="#c0c0c0"/><rect x="60" y="475.2" width="3.5" height="14" rx="1.7" fill="#00ffff"/><text x="71.5" y="486.2" font-family="Liberation Sans" font-size="11" letter-spacing="-0.2" fill="#111">(h) P6 Unknown</text><rect x="33.5" y="494.5" width="8" height="8" fill="#fff" stroke="#a0a0a0"/><rect x="35" y="498" width="5" height="1" fill="#000"/><rect x="37" y="496" width="1" height="5" fill="#000"/><rect x="42" y="498" width="1" height="1" fill="#a0a0a0"/><rect x="44" y="498" width="1" height="1" fill="#a0a0a0"/><rect x="46" y="498" width="1" height="1" fill="#a0a0a0"/><rect x="48" y="498" width="1" height="1" fill="#a0a0a0"/><circle cx="54" cy="498.2" r="4.6" fill="#ff0000"/><rect x="60" y="491.2" width="3.5" height="14" rx="1.7" fill="#ff0000"/><text x="71.5" y="502.2" font-family="Liberation Sans" font-size="11" letter-spacing="-0.2" fill="#111">(h) P7 Unknown</text><rect x="33.5" y="510.5" width="8" height="8" fill="#fff" stroke="#a0a0a0"/><rect x="35" y="514" width="5" height="1" fill="#000"/><rect x="37" y="512" width="1" height="5" fill="#000"/><rect x="42" y="514" width="1" height="1" fill="#a0a0a0"/><rect x="44" y="514" width="1" height="1" fill="#a0a0a0"/><rect x="46" y="514" width="1" height="1" fill="#a0a0a0"/><rect x="48" y="514" width="1" height="1" fill="#a0a0a0"/><circle cx="54" cy="514.2" r="4.6" fill="#c0c0c0"/><rect x="60" y="507.20000000000005" width="3.5" height="14" rx="1.7" fill="#ff00ff"/><text x="71.5" y="518.2" font-family="Liberation Sans" font-size="11" letter-spacing="-0.2" fill="#111">(h) P8 Unknown</text><rect x="33.5" y="526.5" width="8" height="8" fill="#fff" stroke="#a0a0a0"/><rect x="35" y="530" width="5" height="1" fill="#000"/><rect x="37" y="528" width="1" height="5" fill="#000"/><rect x="42" y="530" width="1" height="1" fill="#a0a0a0"/><rect x="44" y="530" width="1" height="1" fill="#a0a0a0"/><rect x="46" y="530" width="1" height="1" fill="#a0a0a0"/><rect x="48" y="530" width="1" height="1" fill="#a0a0a0"/><circle cx="54" cy="530.2" r="4.6" fill="#c0c0c0"/><rect x="60" y="523.2" width="3.5" height="14" rx="1.7" fill="#ffff80"/><text x="71.5" y="534.2" font-family="Liberation Sans" font-size="11" letter-spacing="-0.2" fill="#111">(h) P9 Unknown</text><rect x="33.5" y="542.5" width="8" height="8" fill="#fff" stroke="#a0a0a0"/><rect x="35" y="546" width="5" height="1" fill="#000"/><rect x="37" y="544" width="1" height="5" fill="#000"/><rect x="42" y="546" width="1" height="1" fill="#a0a0a0"/><rect x="44" y="546" width="1" height="1" fill="#a0a0a0"/><rect x="46" y="546" width="1" height="1" fill="#a0a0a0"/><rect x="48" y="546" width="1" height="1" fill="#a0a0a0"/><circle cx="54" cy="546.2" r="4.6" fill="#c0c0c0"/><rect x="60" y="539.2" width="3.5" height="14" rx="1.7" fill="#8080ff"/><text x="71.5" y="550.2" font-family="Liberation Sans" font-size="11" letter-spacing="-0.2" fill="#111">(h) P10 Unknown</text><rect x="33.5" y="558.5" width="8" height="8" fill="#fff" stroke="#a0a0a0"/><rect x="35" y="562" width="5" height="1" fill="#000"/><rect x="37" y="560" width="1" height="5" fill="#000"/><rect x="42" y="562" width="1" height="1" fill="#a0a0a0"/><rect x="44" y="562" width="1" height="1" fill="#a0a0a0"/><rect x="46" y="562" width="1" height="1" fill="#a0a0a0"/><rect x="48" y="562" width="1" height="1" fill="#a0a0a0"/><circle cx="54" cy="562.2" r="4.6" fill="#80ff80"/><rect x="60" y="555.2" width="3.5" height="14" rx="1.7" fill="#80ff80"/><text x="71.5" y="566.2" font-family="Liberation Sans" font-size="11" letter-spacing="-0.2" fill="#111">(h) P11 Unknown</text><rect x="33.5" y="574.5" width="8" height="8" fill="#fff" stroke="#a0a0a0"/><rect x="35" y="578" width="5" height="1" fill="#000"/><rect x="37" y="576" width="1" height="5" fill="#000"/><rect x="42" y="578" width="1" height="1" fill="#a0a0a0"/><rect x="44" y="578" width="1" height="1" fill="#a0a0a0"/><rect x="46" y="578" width="1" height="1" fill="#a0a0a0"/><rect x="48" y="578" width="1" height="1" fill="#a0a0a0"/><circle cx="54" cy="578.2" r="4.6" fill="#c0c0c0"/><rect x="60" y="571.2" width="3.5" height="14" rx="1.7" fill="#80ffff"/><text x="71.5" y="582.2" font-family="Liberation Sans" font-size="11" letter-spacing="-0.2" fill="#111">(h) P12 Unknown</text><rect x="33.5" y="590.5" width="8" height="8" fill="#fff" stroke="#a0a0a0"/><rect x="35" y="594" width="5" height="1" fill="#000"/><rect x="37" y="592" width="1" height="5" fill="#000"/><rect x="42" y="594" width="1" height="1" fill="#a0a0a0"/><rect x="44" y="594" width="1" height="1" fill="#a0a0a0"/><rect x="46" y="594" width="1" height="1" fill="#a0a0a0"/><rect x="48" y="594" width="1" height="1" fill="#a0a0a0"/><rect x="68.5" y="586.5" width="90" height="15" fill="#ffff00" stroke="#000" stroke-dasharray="1 1"/><circle cx="54" cy="594.2" r="4.6" fill="#f08080"/><rect x="60" y="587.2" width="3.5" height="14" rx="1.7" fill="#f08080"/><text x="71.5" y="598.2" font-family="Liberation Sans" font-size="11" letter-spacing="-0.2" fill="#111">(v) P13 Unknown</text><rect x="33.5" y="606.5" width="8" height="8" fill="#fff" stroke="#a0a0a0"/><rect x="35" y="610" width="5" height="1" fill="#000"/><rect x="37" y="608" width="1" height="5" fill="#000"/><rect x="42" y="610" width="1" height="1" fill="#a0a0a0"/><rect x="44" y="610" width="1" height="1" fill="#a0a0a0"/><rect x="46" y="610" width="1" height="1" fill="#a0a0a0"/><rect x="48" y="610" width="1" height="1" fill="#a0a0a0"/><circle cx="54" cy="610.2" r="4.6" fill="#c0c0c0"/><rect x="60" y="603.2" width="3.5" height="14" rx="1.7" fill="#ff80ff"/><text x="71.5" y="614.2" font-family="Liberation Sans" font-size="11" letter-spacing="-0.2" fill="#111">(h) P14 Unknown</text><rect x="18" y="626" width="1" height="1" fill="#a0a0a0"/><rect x="20" y="626" width="1" height="1" fill="#a0a0a0"/><rect x="22" y="626" width="1" height="1" fill="#a0a0a0"/><rect x="24" y="626" width="1" height="1" fill="#a0a0a0"/><rect x="26" y="626" width="1" height="1" fill="#a0a0a0"/><rect x="28" y="626" width="1" height="1" fill="#a0a0a0"/><circle cx="34" cy="626.0" r="4.6" fill="#c8c8c8"/><rect x="40" y="619.0" width="3.5" height="14" rx="1.7" fill="#c8c8c8"/><text x="51.5" y="630.0" font-family="Liberation Sans" font-size="11" letter-spacing="-0.2" fill="#111">Unassigned Layers</text><rect x="13.5" y="638.5" width="8" height="8" fill="#fff" stroke="#a0a0a0"/><rect x="15" y="642" width="5" height="1" fill="#000"/><rect x="17" y="640" width="1" height="5" fill="#000"/><rect x="22" y="642" width="1" height="1" fill="#a0a0a0"/><rect x="24" y="642" width="1" height="1" fill="#a0a0a0"/><rect x="26" y="642" width="1" height="1" fill="#a0a0a0"/><rect x="28" y="642" width="1" height="1" fill="#a0a0a0"/><text x="30" y="646" font-family="Liberation Sans" font-weight="bold" font-size="10" fill="#1a7a7a">A</text><text x="35" y="648.5" font-family="Liberation Sans" font-weight="bold" font-size="11" fill="#0000c0">A</text><text x="51.5" y="646.0" font-family="Liberation Sans" font-size="11" letter-spacing="-0.2" fill="#111">Aperture Tables</text><rect x="13.5" y="654.5" width="8" height="8" fill="#fff" stroke="#a0a0a0"/><rect x="15" y="658" width="5" height="1" fill="#000"/><rect x="17" y="656" width="1" height="5" fill="#000"/><rect x="22" y="658" width="1" height="1" fill="#a0a0a0"/><rect x="24" y="658" width="1" height="1" fill="#a0a0a0"/><rect x="26" y="658" width="1" height="1" fill="#a0a0a0"/><rect x="28" y="658" width="1" height="1" fill="#a0a0a0"/><text x="30" y="662" font-family="Liberation Sans" font-weight="bold" font-size="10" fill="#1a7a7a">P</text><text x="35" y="664.5" font-family="Liberation Sans" font-weight="bold" font-size="11" fill="#0000c0">R</text><text x="51.5" y="662.0" font-family="Liberation Sans" font-size="11" letter-spacing="-0.2" fill="#111">Drill Tables</text><rect x="18" y="674" width="1" height="1" fill="#a0a0a0"/><rect x="20" y="674" width="1" height="1" fill="#a0a0a0"/><rect x="22" y="674" width="1" height="1" fill="#a0a0a0"/><rect x="24" y="674" width="1" height="1" fill="#a0a0a0"/><rect x="26" y="674" width="1" height="1" fill="#a0a0a0"/><rect x="28" y="674" width="1" height="1" fill="#a0a0a0"/><text x="30" y="678" font-family="Liberation Sans" font-weight="bold" font-size="10" fill="#1a7a7a">P</text><text x="35" y="680.5" font-family="Liberation Sans" font-weight="bold" font-size="11" fill="#0000c0">P</text><text x="51.5" y="678.0" font-family="Liberation Sans" font-size="11" letter-spacing="-0.2" fill="#111">Probe Tables</text></g><rect x="149" y="361" width="8" height="400" fill="#e0dfe3"/><rect x="155" y="84" width="1" height="693" fill="#fff"/><rect x="8" y="759" width="141" height="16" fill="#f0f0f2"/><rect x="116" y="759" width="1" height="1" fill="#fff"/><rect x="116" y="761" width="1" height="1" fill="#fff"/><rect x="116" y="763" width="1" height="1" fill="#fff"/><rect x="116" y="765" width="1" height="1" fill="#fff"/><rect x="116" y="767" width="1" height="1" fill="#fff"/><rect x="116" y="769" width="1" height="1" fill="#fff"/><rect x="116" y="771" width="1" height="1" fill="#fff"/><rect x="116" y="773" width="1" height="1" fill="#fff"/><rect x="118" y="759" width="1" height="1" fill="#fff"/><rect x="118" y="761" width="1" height="1" fill="#fff"/><rect x="118" y="763" width="1" height="1" fill="#fff"/><rect x="118" y="765" width="1" height="1" fill="#fff"/><rect x="118" y="767" width="1" height="1" fill="#fff"/><rect x="118" y="769" width="1" height="1" fill="#fff"/><rect x="118" y="771" width="1" height="1" fill="#fff"/><rect x="118" y="773" width="1" height="1" fill="#fff"/><rect x="120" y="759" width="1" height="1" fill="#fff"/><rect x="120" y="761" width="1" height="1" fill="#fff"/><rect x="120" y="763" width="1" height="1" fill="#fff"/><rect x="120" y="765" width="1" height="1" fill="#fff"/><rect x="120" y="767" width="1" height="1" fill="#fff"/><rect x="120" y="769" width="1" height="1" fill="#fff"/><rect x="120" y="771" width="1" height="1" fill="#fff"/><rect x="120" y="773" width="1" height="1" fill="#fff"/><rect x="122" y="759" width="1" height="1" fill="#fff"/><rect x="122" y="761" width="1" height="1" fill="#fff"/><rect x="122" y="763" width="1" height="1" fill="#fff"/><rect x="122" y="765" width="1" height="1" fill="#fff"/><rect x="122" y="767" width="1" height="1" fill="#fff"/><rect x="122" y="769" width="1" height="1" fill="#fff"/><rect x="122" y="771" width="1" height="1" fill="#fff"/><rect x="122" y="773" width="1" height="1" fill="#fff"/><rect x="124" y="759" width="1" height="1" fill="#fff"/><rect x="124" y="761" width="1" height="1" fill="#fff"/><rect x="124" y="763" width="1" height="1" fill="#fff"/><rect x="124" y="765" width="1" height="1" fill="#fff"/><rect x="124" y="767" width="1" height="1" fill="#fff"/><rect x="124" y="769" width="1" height="1" fill="#fff"/><rect x="124" y="771" width="1" height="1" fill="#fff"/><rect x="124" y="773" width="1" height="1" fill="#fff"/><rect x="126" y="759" width="1" height="1" fill="#fff"/><rect x="126" y="761" width="1" height="1" fill="#fff"/><rect x="126" y="763" width="1" height="1" fill="#fff"/><rect x="126" y="765" width="1" height="1" fill="#fff"/><rect x="126" y="767" width="1" height="1" fill="#fff"/><rect x="126" y="769" width="1" height="1" fill="#fff"/><rect x="126" y="771" width="1" height="1" fill="#fff"/><rect x="126" y="773" width="1" height="1" fill="#fff"/><rect x="128" y="759" width="1" height="1" fill="#fff"/><rect x="128" y="761" width="1" height="1" fill="#fff"/><rect x="128" y="763" width="1" height="1" fill="#fff"/><rect x="128" y="765" width="1" height="1" fill="#fff"/><rect x="128" y="767" width="1" height="1" fill="#fff"/><rect x="128" y="769" width="1" height="1" fill="#fff"/><rect x="128" y="771" width="1" height="1" fill="#fff"/><rect x="128" y="773" width="1" height="1" fill="#fff"/><rect x="130" y="759" width="1" height="1" fill="#fff"/><rect x="130" y="761" width="1" height="1" fill="#fff"/><rect x="130" y="763" width="1" height="1" fill="#fff"/><rect x="130" y="765" width="1" height="1" fill="#fff"/><rect x="130" y="767" width="1" height="1" fill="#fff"/><rect x="130" y="769" width="1" height="1" fill="#fff"/><rect x="130" y="771" width="1" height="1" fill="#fff"/><rect x="130" y="773" width="1" height="1" fill="#fff"/><rect x="132" y="759" width="1" height="1" fill="#fff"/><rect x="132" y="761" width="1" height="1" fill="#fff"/><rect x="132" y="763" width="1" height="1" fill="#fff"/><rect x="132" y="765" width="1" height="1" fill="#fff"/><rect x="132" y="767" width="1" height="1" fill="#fff"/><rect x="132" y="769" width="1" height="1" fill="#fff"/><rect x="132" y="771" width="1" height="1" fill="#fff"/><rect x="132" y="773" width="1" height="1" fill="#fff"/><rect x="8" y="759" width="17" height="16" fill="#e0dfe3"/><path d="M8.5 774.5V759.5H24.5" fill="none" stroke="#fff"/><path d="M8.5 774.5H24.5V759.5" fill="none" stroke="#808080"/><path d="M14 767L18 763V771Z" fill="#000"/><rect x="25" y="759" width="91" height="16" fill="#e0dfe3"/><path d="M25.5 774.5V759.5H115.5" fill="none" stroke="#fff"/><path d="M25.5 774.5H115.5V759.5" fill="none" stroke="#808080"/><rect x="134" y="759" width="15" height="16" fill="#e0dfe3"/><path d="M134.5 774.5V759.5H148.5" fill="none" stroke="#fff"/><path d="M134.5 774.5H148.5V759.5" fill="none" stroke="#808080"/><path d="M143 767L139 763V771Z" fill="#000"/></svg>
<div class="a" style="left:162px;top:84px;width:915px;height:675px;background:#000"></div>
<svg class="a" style="left:0;top:0" width="1100" height="800" viewBox="0 0 1100 800"><defs><clipPath id="cp"><rect x="162" y="84" width="915" height="675"/></clipPath></defs><g clip-path="url(#cp)" fill="none" stroke="#e8868a" stroke-width="1" shape-rendering="crispEdges"><circle cx="290" cy="125.5" r="12"/><circle cx="290" cy="125.5" r="8"/><circle cx="290" cy="125.5" r="4.5"/><path d="M277.0 125.5 L303.0 125.5"/><path d="M290.0 112.5 L290.0 138.5"/><circle cx="290" cy="715.5" r="12"/><circle cx="290" cy="715.5" r="8"/><circle cx="290" cy="715.5" r="4.5"/><path d="M277.0 715.5 L303.0 715.5"/><path d="M290.0 702.5 L290.0 728.5"/><path d="M290.5 140.0 L290.5 302.0"/><path d="M290.5 539.0 L290.5 702.0"/><path d="M308.0 150.0 L308.0 131.0 L316.0 122.0 L335.0 122.0"/><circle cx="335" cy="149" r="7.5"/><path d="M308.0 689.0 L308.0 711.0 L316.0 719.0 L335.0 719.0"/><circle cx="335" cy="691" r="8"/><path d="M918.5 122.0 L938.7 122.0 L946.7 130.0 L946.7 150.0"/><circle cx="920" cy="149.7" r="7.5"/><path d="M919.0 718.0 L939.0 718.0 L946.0 711.0 L946.0 691.0"/><circle cx="919.3" cy="691" r="8"/><ellipse cx="427" cy="289" rx="4.5" ry="4"/><ellipse cx="427" cy="301" rx="4.5" ry="4"/><ellipse cx="439" cy="289" rx="4.5" ry="4"/><ellipse cx="439" cy="301" rx="4.5" ry="4"/><ellipse cx="451" cy="289" rx="4.5" ry="4"/><ellipse cx="451" cy="301" rx="4.5" ry="4"/><ellipse cx="463" cy="289" rx="4.5" ry="4"/><ellipse cx="463" cy="301" rx="4.5" ry="4"/><ellipse cx="475" cy="289" rx="4.5" ry="4"/><ellipse cx="475" cy="301" rx="4.5" ry="4"/><ellipse cx="487" cy="289" rx="4.5" ry="4"/><ellipse cx="487" cy="301" rx="4.5" ry="4"/><ellipse cx="499" cy="289" rx="4.5" ry="4"/><ellipse cx="499" cy="301" rx="4.5" ry="4"/><ellipse cx="511" cy="289" rx="4.5" ry="4"/><ellipse cx="511" cy="301" rx="4.5" ry="4"/><ellipse cx="523" cy="289" rx="4.5" ry="4"/><ellipse cx="523" cy="301" rx="4.5" ry="4"/><ellipse cx="535" cy="289" rx="4.5" ry="4"/><ellipse cx="535" cy="301" rx="4.5" ry="4"/><ellipse cx="547" cy="289" rx="4.5" ry="4"/><ellipse cx="547" cy="301" rx="4.5" ry="4"/><ellipse cx="559" cy="289" rx="4.5" ry="4"/><ellipse cx="559" cy="301" rx="4.5" ry="4"/><ellipse cx="571" cy="289" rx="4.5" ry="4"/><ellipse cx="571" cy="301" rx="4.5" ry="4"/><ellipse cx="583" cy="289" rx="4.5" ry="4"/><ellipse cx="583" cy="301" rx="4.5" ry="4"/><ellipse cx="595" cy="289" rx="4.5" ry="4"/><ellipse cx="595" cy="301" rx="4.5" ry="4"/><ellipse cx="607" cy="289" rx="4.5" ry="4"/><ellipse cx="607" cy="301" rx="4.5" ry="4"/><ellipse cx="619" cy="289" rx="4.5" ry="4"/><ellipse cx="619" cy="301" rx="4.5" ry="4"/><ellipse cx="631" cy="289" rx="4.5" ry="4"/><ellipse cx="631" cy="301" rx="4.5" ry="4"/><ellipse cx="643" cy="289" rx="4.5" ry="4"/><ellipse cx="643" cy="301" rx="4.5" ry="4"/><ellipse cx="655" cy="289" rx="4.5" ry="4"/><ellipse cx="655" cy="301" rx="4.5" ry="4"/><ellipse cx="667" cy="289" rx="4.5" ry="4"/><ellipse cx="667" cy="301" rx="4.5" ry="4"/><ellipse cx="679" cy="289" rx="4.5" ry="4"/><ellipse cx="679" cy="301" rx="4.5" ry="4"/><ellipse cx="691" cy="289" rx="4.5" ry="4"/><ellipse cx="691" cy="301" rx="4.5" ry="4"/><ellipse cx="703" cy="289" rx="4.5" ry="4"/><ellipse cx="703" cy="301" rx="4.5" ry="4"/><ellipse cx="715" cy="289" rx="4.5" ry="4"/><ellipse cx="715" cy="301" rx="4.5" ry="4"/><ellipse cx="727" cy="289" rx="4.5" ry="4"/><ellipse cx="727" cy="301" rx="4.5" ry="4"/><ellipse cx="433.6" cy="647.5" rx="4.5" ry="4"/><rect x="429.1" y="655.0" width="9" height="9"/><ellipse cx="445.5" cy="647.5" rx="4.5" ry="4"/><ellipse cx="445.5" cy="659.5" rx="4.5" ry="4"/><ellipse cx="457.40000000000003" cy="647.5" rx="4.5" ry="4"/><ellipse cx="457.40000000000003" cy="659.5" rx="4.5" ry="4"/><ellipse cx="469.3" cy="647.5" rx="4.5" ry="4"/><ellipse cx="469.3" cy="659.5" rx="4.5" ry="4"/><ellipse cx="481.20000000000005" cy="647.5" rx="4.5" ry="4"/><ellipse cx="481.20000000000005" cy="659.5" rx="4.5" ry="4"/><ellipse cx="493.1" cy="647.5" rx="4.5" ry="4"/><ellipse cx="493.1" cy="659.5" rx="4.5" ry="4"/><ellipse cx="505.0" cy="647.5" rx="4.5" ry="4"/><ellipse cx="505.0" cy="659.5" rx="4.5" ry="4"/><ellipse cx="516.9" cy="647.5" rx="4.5" ry="4"/><ellipse cx="516.9" cy="659.5" rx="4.5" ry="4"/><ellipse cx="528.8000000000001" cy="647.5" rx="4.5" ry="4"/><ellipse cx="528.8000000000001" cy="659.5" rx="4.5" ry="4"/><ellipse cx="540.7" cy="647.5" rx="4.5" ry="4"/><ellipse cx="540.7" cy="659.5" rx="4.5" ry="4"/><ellipse cx="552.6" cy="647.5" rx="4.5" ry="4"/><ellipse cx="552.6" cy="659.5" rx="4.5" ry="4"/><ellipse cx="564.5" cy="647.5" rx="4.5" ry="4"/><ellipse cx="564.5" cy="659.5" rx="4.5" ry="4"/><ellipse cx="576.4000000000001" cy="647.5" rx="4.5" ry="4"/><ellipse cx="576.4000000000001" cy="659.5" rx="4.5" ry="4"/><ellipse cx="588.3000000000001" cy="647.5" rx="4.5" ry="4"/><ellipse cx="588.3000000000001" cy="659.5" rx="4.5" ry="4"/><ellipse cx="600.2" cy="647.5" rx="4.5" ry="4"/><ellipse cx="600.2" cy="659.5" rx="4.5" ry="4"/><ellipse cx="612.1" cy="647.5" rx="4.5" ry="4"/><ellipse cx="612.1" cy="659.5" rx="4.5" ry="4"/><ellipse cx="624.0" cy="647.5" rx="4.5" ry="4"/><ellipse cx="624.0" cy="659.5" rx="4.5" ry="4"/><ellipse cx="635.9000000000001" cy="647.5" rx="4.5" ry="4"/><ellipse cx="635.9000000000001" cy="659.5" rx="4.5" ry="4"/><ellipse cx="647.8000000000001" cy="647.5" rx="4.5" ry="4"/><ellipse cx="647.8000000000001" cy="659.5" rx="4.5" ry="4"/><ellipse cx="659.7" cy="647.5" rx="4.5" ry="4"/><ellipse cx="659.7" cy="659.5" rx="4.5" ry="4"/><ellipse cx="671.6" cy="647.5" rx="4.5" ry="4"/><ellipse cx="671.6" cy="659.5" rx="4.5" ry="4"/><ellipse cx="683.5" cy="647.5" rx="4.5" ry="4"/><ellipse cx="683.5" cy="659.5" rx="4.5" ry="4"/><ellipse cx="695.4000000000001" cy="647.5" rx="4.5" ry="4"/><ellipse cx="695.4000000000001" cy="659.5" rx="4.5" ry="4"/><ellipse cx="707.3" cy="647.5" rx="4.5" ry="4"/><ellipse cx="707.3" cy="659.5" rx="4.5" ry="4"/><ellipse cx="719.2" cy="647.5" rx="4.5" ry="4"/><ellipse cx="719.2" cy="659.5" rx="4.5" ry="4"/><ellipse cx="731.1" cy="647.5" rx="4.5" ry="4"/><ellipse cx="731.1" cy="659.5" rx="4.5" ry="4"/><rect x="363.5" y="330.5" width="8" height="8"/><ellipse cx="380" cy="334.5" rx="4.5" ry="4"/><ellipse cx="367.5" cy="346.43" rx="4.5" ry="4"/><ellipse cx="380" cy="346.43" rx="4.5" ry="4"/><ellipse cx="367.5" cy="358.36" rx="4.5" ry="4"/><ellipse cx="380" cy="358.36" rx="4.5" ry="4"/><ellipse cx="367.5" cy="370.29" rx="4.5" ry="4"/><ellipse cx="380" cy="370.29" rx="4.5" ry="4"/><ellipse cx="367.5" cy="382.22" rx="4.5" ry="4"/><ellipse cx="380" cy="382.22" rx="4.5" ry="4"/><ellipse cx="367.5" cy="394.15" rx="4.5" ry="4"/><ellipse cx="380" cy="394.15" rx="4.5" ry="4"/><ellipse cx="367.5" cy="406.08" rx="4.5" ry="4"/><ellipse cx="380" cy="406.08" rx="4.5" ry="4"/><ellipse cx="367.5" cy="418.01" rx="4.5" ry="4"/><ellipse cx="380" cy="418.01" rx="4.5" ry="4"/><ellipse cx="367.5" cy="429.94" rx="4.5" ry="4"/><ellipse cx="380" cy="429.94" rx="4.5" ry="4"/><ellipse cx="367.5" cy="441.87" rx="4.5" ry="4"/><ellipse cx="380" cy="441.87" rx="4.5" ry="4"/><ellipse cx="367.5" cy="453.8" rx="4.5" ry="4"/><ellipse cx="380" cy="453.8" rx="4.5" ry="4"/><ellipse cx="367.5" cy="465.73" rx="4.5" ry="4"/><ellipse cx="380" cy="465.73" rx="4.5" ry="4"/><ellipse cx="367.5" cy="477.65999999999997" rx="4.5" ry="4"/><ellipse cx="380" cy="477.65999999999997" rx="4.5" ry="4"/><ellipse cx="367.5" cy="489.59000000000003" rx="4.5" ry="4"/><ellipse cx="380" cy="489.59000000000003" rx="4.5" ry="4"/><ellipse cx="367.5" cy="501.52" rx="4.5" ry="4"/><ellipse cx="380" cy="501.52" rx="4.5" ry="4"/><ellipse cx="367.5" cy="513.45" rx="4.5" ry="4"/><ellipse cx="380" cy="513.45" rx="4.5" ry="4"/><ellipse cx="367.5" cy="525.38" rx="4.5" ry="4"/><ellipse cx="380" cy="525.38" rx="4.5" ry="4"/><ellipse cx="367.5" cy="537.31" rx="4.5" ry="4"/><ellipse cx="380" cy="537.31" rx="4.5" ry="4"/><ellipse cx="367.5" cy="549.24" rx="4.5" ry="4"/><ellipse cx="380" cy="549.24" rx="4.5" ry="4"/><ellipse cx="367.5" cy="561.17" rx="4.5" ry="4"/><ellipse cx="380" cy="561.17" rx="4.5" ry="4"/><ellipse cx="367.5" cy="573.1" rx="4.5" ry="4"/><ellipse cx="380" cy="573.1" rx="4.5" ry="4"/><ellipse cx="367.5" cy="585.03" rx="4.5" ry="4"/><ellipse cx="380" cy="585.03" rx="4.5" ry="4"/><ellipse cx="367.5" cy="596.96" rx="4.5" ry="4"/><ellipse cx="380" cy="596.96" rx="4.5" ry="4"/><ellipse cx="367.5" cy="608.89" rx="4.5" ry="4"/><ellipse cx="380" cy="608.89" rx="4.5" ry="4"/><ellipse cx="367.5" cy="620.8199999999999" rx="4.5" ry="4"/><ellipse cx="380" cy="620.8199999999999" rx="4.5" ry="4"/><ellipse cx="367.5" cy="632.75" rx="4.5" ry="4"/><ellipse cx="380" cy="632.75" rx="4.5" ry="4"/><ellipse cx="780" cy="328.0" rx="4.5" ry="4"/><ellipse cx="791.7" cy="328.0" rx="4.5" ry="4"/><ellipse cx="780" cy="339.93" rx="4.5" ry="4"/><ellipse cx="791.7" cy="339.93" rx="4.5" ry="4"/><ellipse cx="780" cy="351.86" rx="4.5" ry="4"/><ellipse cx="791.7" cy="351.86" rx="4.5" ry="4"/><ellipse cx="780" cy="363.79" rx="4.5" ry="4"/><ellipse cx="791.7" cy="363.79" rx="4.5" ry="4"/><ellipse cx="780" cy="375.72" rx="4.5" ry="4"/><ellipse cx="791.7" cy="375.72" rx="4.5" ry="4"/><ellipse cx="780" cy="387.65" rx="4.5" ry="4"/><ellipse cx="791.7" cy="387.65" rx="4.5" ry="4"/><ellipse cx="780" cy="399.58" rx="4.5" ry="4"/><ellipse cx="791.7" cy="399.58" rx="4.5" ry="4"/><ellipse cx="780" cy="411.51" rx="4.5" ry="4"/><ellipse cx="791.7" cy="411.51" rx="4.5" ry="4"/><ellipse cx="780" cy="423.44" rx="4.5" ry="4"/><ellipse cx="791.7" cy="423.44" rx="4.5" ry="4"/><ellipse cx="780" cy="435.37" rx="4.5" ry="4"/><ellipse cx="791.7" cy="435.37" rx="4.5" ry="4"/><ellipse cx="780" cy="447.3" rx="4.5" ry="4"/><ellipse cx="791.7" cy="447.3" rx="4.5" ry="4"/><ellipse cx="780" cy="459.23" rx="4.5" ry="4"/><ellipse cx="791.7" cy="459.23" rx="4.5" ry="4"/><ellipse cx="780" cy="471.15999999999997" rx="4.5" ry="4"/><ellipse cx="791.7" cy="471.15999999999997" rx="4.5" ry="4"/><ellipse cx="780" cy="483.09000000000003" rx="4.5" ry="4"/><ellipse cx="791.7" cy="483.09000000000003" rx="4.5" ry="4"/><ellipse cx="780" cy="495.02" rx="4.5" ry="4"/><ellipse cx="791.7" cy="495.02" rx="4.5" ry="4"/><ellipse cx="780" cy="506.95" rx="4.5" ry="4"/><ellipse cx="791.7" cy="506.95" rx="4.5" ry="4"/><ellipse cx="780" cy="518.88" rx="4.5" ry="4"/><ellipse cx="791.7" cy="518.88" rx="4.5" ry="4"/><ellipse cx="780" cy="530.81" rx="4.5" ry="4"/><ellipse cx="791.7" cy="530.81" rx="4.5" ry="4"/><ellipse cx="780" cy="542.74" rx="4.5" ry="4"/><ellipse cx="791.7" cy="542.74" rx="4.5" ry="4"/><ellipse cx="780" cy="554.67" rx="4.5" ry="4"/><ellipse cx="791.7" cy="554.67" rx="4.5" ry="4"/><ellipse cx="780" cy="566.6" rx="4.5" ry="4"/><ellipse cx="791.7" cy="566.6" rx="4.5" ry="4"/><ellipse cx="780" cy="578.53" rx="4.5" ry="4"/><ellipse cx="791.7" cy="578.53" rx="4.5" ry="4"/><ellipse cx="780" cy="590.46" rx="4.5" ry="4"/><ellipse cx="791.7" cy="590.46" rx="4.5" ry="4"/><ellipse cx="780" cy="602.39" rx="4.5" ry="4"/><ellipse cx="791.7" cy="602.39" rx="4.5" ry="4"/><ellipse cx="780" cy="614.3199999999999" rx="4.5" ry="4"/><ellipse cx="791.7" cy="614.3199999999999" rx="4.5" ry="4"/><ellipse cx="780" cy="626.25" rx="4.5" ry="4"/><rect x="787.7" y="622.25" width="8" height="8"/><rect x="517" y="407" width="122" height="8" fill="#e8868a" stroke="none"/><rect x="519" y="409" width="1" height="4" fill="#000" stroke="none"/><rect x="521" y="409" width="1" height="4" fill="#000" stroke="none"/><rect x="523" y="409" width="1" height="4" fill="#000" stroke="none"/><rect x="526" y="409" width="1" height="4" fill="#000" stroke="none"/><rect x="528" y="409" width="1" height="4" fill="#000" stroke="none"/><rect x="531" y="409" width="1" height="4" fill="#000" stroke="none"/><rect x="533" y="409" width="1" height="4" fill="#000" stroke="none"/><rect x="536" y="409" width="1" height="4" fill="#000" stroke="none"/><rect x="538" y="409" width="1" height="4" fill="#000" stroke="none"/><rect x="541" y="409" width="1" height="4" fill="#000" stroke="none"/><rect x="543" y="409" width="1" height="4" fill="#000" stroke="none"/><rect x="545" y="409" width="1" height="4" fill="#000" stroke="none"/><rect x="548" y="409" width="1" height="4" fill="#000" stroke="none"/><rect x="550" y="409" width="1" height="4" fill="#000" stroke="none"/><rect x="553" y="409" width="1" height="4" fill="#000" stroke="none"/><rect x="555" y="409" width="1" height="4" fill="#000" stroke="none"/><rect x="558" y="409" width="1" height="4" fill="#000" stroke="none"/><rect x="560" y="409" width="1" height="4" fill="#000" stroke="none"/><rect x="563" y="409" width="1" height="4" fill="#000" stroke="none"/><rect x="565" y="409" width="1" height="4" fill="#000" stroke="none"/><rect x="568" y="409" width="1" height="4" fill="#000" stroke="none"/><rect x="570" y="409" width="1" height="4" fill="#000" stroke="none"/><rect x="572" y="409" width="1" height="4" fill="#000" stroke="none"/><rect x="575" y="409" width="1" height="4" fill="#000" stroke="none"/><rect x="577" y="409" width="1" height="4" fill="#000" stroke="none"/><rect x="580" y="409" width="1" height="4" fill="#000" stroke="none"/><rect x="582" y="409" width="1" height="4" fill="#000" stroke="none"/><rect x="585" y="409" width="1" height="4" fill="#000" stroke="none"/><rect x="587" y="409" width="1" height="4" fill="#000" stroke="none"/><rect x="590" y="409" width="1" height="4" fill="#000" stroke="none"/><rect x="592" y="409" width="1" height="4" fill="#000" stroke="none"/><rect x="594" y="409" width="1" height="4" fill="#000" stroke="none"/><rect x="597" y="409" width="1" height="4" fill="#000" stroke="none"/><rect x="599" y="409" width="1" height="4" fill="#000" stroke="none"/><rect x="602" y="409" width="1" height="4" fill="#000" stroke="none"/><rect x="604" y="409" width="1" height="4" fill="#000" stroke="none"/><rect x="607" y="409" width="1" height="4" fill="#000" stroke="none"/><rect x="609" y="409" width="1" height="4" fill="#000" stroke="none"/><rect x="612" y="409" width="1" height="4" fill="#000" stroke="none"/><rect x="614" y="409" width="1" height="4" fill="#000" stroke="none"/><rect x="617" y="409" width="1" height="4" fill="#000" stroke="none"/><rect x="619" y="409" width="1" height="4" fill="#000" stroke="none"/><rect x="621" y="409" width="1" height="4" fill="#000" stroke="none"/><rect x="624" y="409" width="1" height="4" fill="#000" stroke="none"/><rect x="626" y="409" width="1" height="4" fill="#000" stroke="none"/><rect x="629" y="409" width="1" height="4" fill="#000" stroke="none"/><rect x="631" y="409" width="1" height="4" fill="#000" stroke="none"/><rect x="634" y="409" width="1" height="4" fill="#000" stroke="none"/><rect x="517" y="547" width="122" height="8" fill="#e8868a" stroke="none"/><rect x="519" y="549" width="1" height="4" fill="#000" stroke="none"/><rect x="521" y="549" width="1" height="4" fill="#000" stroke="none"/><rect x="523" y="549" width="1" height="4" fill="#000" stroke="none"/><rect x="526" y="549" width="1" height="4" fill="#000" stroke="none"/><rect x="528" y="549" width="1" height="4" fill="#000" stroke="none"/><rect x="531" y="549" width="1" height="4" fill="#000" stroke="none"/><rect x="533" y="549" width="1" height="4" fill="#000" stroke="none"/><rect x="536" y="549" width="1" height="4" fill="#000" stroke="none"/><rect x="538" y="549" width="1" height="4" fill="#000" stroke="none"/><rect x="541" y="549" width="1" height="4" fill="#000" stroke="none"/><rect x="543" y="549" width="1" height="4" fill="#000" stroke="none"/><rect x="545" y="549" width="1" height="4" fill="#000" stroke="none"/><rect x="548" y="549" width="1" height="4" fill="#000" stroke="none"/><rect x="550" y="549" width="1" height="4" fill="#000" stroke="none"/><rect x="553" y="549" width="1" height="4" fill="#000" stroke="none"/><rect x="555" y="549" width="1" height="4" fill="#000" stroke="none"/><rect x="558" y="549" width="1" height="4" fill="#000" stroke="none"/><rect x="560" y="549" width="1" height="4" fill="#000" stroke="none"/><rect x="563" y="549" width="1" height="4" fill="#000" stroke="none"/><rect x="565" y="549" width="1" height="4" fill="#000" stroke="none"/><rect x="568" y="549" width="1" height="4" fill="#000" stroke="none"/><rect x="570" y="549" width="1" height="4" fill="#000" stroke="none"/><rect x="572" y="549" width="1" height="4" fill="#000" stroke="none"/><rect x="575" y="549" width="1" height="4" fill="#000" stroke="none"/><rect x="577" y="549" width="1" height="4" fill="#000" stroke="none"/><rect x="580" y="549" width="1" height="4" fill="#000" stroke="none"/><rect x="582" y="549" width="1" height="4" fill="#000" stroke="none"/><rect x="585" y="549" width="1" height="4" fill="#000" stroke="none"/><rect x="587" y="549" width="1" height="4" fill="#000" stroke="none"/><rect x="590" y="549" width="1" height="4" fill="#000" stroke="none"/><rect x="592" y="549" width="1" height="4" fill="#000" stroke="none"/><rect x="594" y="549" width="1" height="4" fill="#000" stroke="none"/><rect x="597" y="549" width="1" height="4" fill="#000" stroke="none"/><rect x="599" y="549" width="1" height="4" fill="#000" stroke="none"/><rect x="602" y="549" width="1" height="4" fill="#000" stroke="none"/><rect x="604" y="549" width="1" height="4" fill="#000" stroke="none"/><rect x="607" y="549" width="1" height="4" fill="#000" stroke="none"/><rect x="609" y="549" width="1" height="4" fill="#000" stroke="none"/><rect x="612" y="549" width="1" height="4" fill="#000" stroke="none"/><rect x="614" y="549" width="1" height="4" fill="#000" stroke="none"/><rect x="617" y="549" width="1" height="4" fill="#000" stroke="none"/><rect x="619" y="549" width="1" height="4" fill="#000" stroke="none"/><rect x="621" y="549" width="1" height="4" fill="#000" stroke="none"/><rect x="624" y="549" width="1" height="4" fill="#000" stroke="none"/><rect x="626" y="549" width="1" height="4" fill="#000" stroke="none"/><rect x="629" y="549" width="1" height="4" fill="#000" stroke="none"/><rect x="631" y="549" width="1" height="4" fill="#000" stroke="none"/><rect x="634" y="549" width="1" height="4" fill="#000" stroke="none"/><rect x="503" y="420" width="8" height="121" fill="#e8868a" stroke="none"/><rect x="505" y="422" width="5" height="1" fill="#000" stroke="none"/><rect x="505" y="424" width="5" height="1" fill="#000" stroke="none"/><rect x="505" y="426" width="5" height="1" fill="#000" stroke="none"/><rect x="505" y="429" width="5" height="1" fill="#000" stroke="none"/><rect x="505" y="431" width="5" height="1" fill="#000" stroke="none"/><rect x="505" y="434" width="5" height="1" fill="#000" stroke="none"/><rect x="505" y="436" width="5" height="1" fill="#000" stroke="none"/><rect x="505" y="439" width="5" height="1" fill="#000" stroke="none"/><rect x="505" y="441" width="5" height="1" fill="#000" stroke="none"/><rect x="505" y="444" width="5" height="1" fill="#000" stroke="none"/><rect x="505" y="446" width="5" height="1" fill="#000" stroke="none"/><rect x="505" y="448" width="5" height="1" fill="#000" stroke="none"/><rect x="505" y="451" width="5" height="1" fill="#000" stroke="none"/><rect x="505" y="453" width="5" height="1" fill="#000" stroke="none"/><rect x="505" y="456" width="5" height="1" fill="#000" stroke="none"/><rect x="505" y="458" width="5" height="1" fill="#000" stroke="none"/><rect x="505" y="461" width="5" height="1" fill="#000" stroke="none"/><rect x="505" y="463" width="5" height="1" fill="#000" stroke="none"/><rect x="505" y="466" width="5" height="1" fill="#000" stroke="none"/><rect x="505" y="468" width="5" height="1" fill="#000" stroke="none"/><rect x="505" y="471" width="5" height="1" fill="#000" stroke="none"/><rect x="505" y="473" width="5" height="1" fill="#000" stroke="none"/><rect x="505" y="475" width="5" height="1" fill="#000" stroke="none"/><rect x="505" y="478" width="5" height="1" fill="#000" stroke="none"/><rect x="505" y="480" width="5" height="1" fill="#000" stroke="none"/><rect x="505" y="483" width="5" height="1" fill="#000" stroke="none"/><rect x="505" y="485" width="5" height="1" fill="#000" stroke="none"/><rect x="505" y="488" width="5" height="1" fill="#000" stroke="none"/><rect x="505" y="490" width="5" height="1" fill="#000" stroke="none"/><rect x="505" y="493" width="5" height="1" fill="#000" stroke="none"/><rect x="505" y="495" width="5" height="1" fill="#000" stroke="none"/><rect x="505" y="497" width="5" height="1" fill="#000" stroke="none"/><rect x="505" y="500" width="5" height="1" fill="#000" stroke="none"/><rect x="505" y="502" width="5" height="1" fill="#000" stroke="none"/><rect x="505" y="505" width="5" height="1" fill="#000" stroke="none"/><rect x="505" y="507" width="5" height="1" fill="#000" stroke="none"/><rect x="505" y="510" width="5" height="1" fill="#000" stroke="none"/><rect x="505" y="512" width="5" height="1" fill="#000" stroke="none"/><rect x="505" y="515" width="5" height="1" fill="#000" stroke="none"/><rect x="505" y="517" width="5" height="1" fill="#000" stroke="none"/><rect x="505" y="520" width="5" height="1" fill="#000" stroke="none"/><rect x="505" y="522" width="5" height="1" fill="#000" stroke="none"/><rect x="505" y="524" width="5" height="1" fill="#000" stroke="none"/><rect x="505" y="527" width="5" height="1" fill="#000" stroke="none"/><rect x="505" y="529" width="5" height="1" fill="#000" stroke="none"/><rect x="505" y="532" width="5" height="1" fill="#000" stroke="none"/><rect x="505" y="534" width="5" height="1" fill="#000" stroke="none"/><rect x="505" y="537" width="5" height="1" fill="#000" stroke="none"/><rect x="644" y="420" width="8" height="121" fill="#e8868a" stroke="none"/><rect x="646" y="422" width="5" height="1" fill="#000" stroke="none"/><rect x="646" y="424" width="5" height="1" fill="#000" stroke="none"/><rect x="646" y="426" width="5" height="1" fill="#000" stroke="none"/><rect x="646" y="429" width="5" height="1" fill="#000" stroke="none"/><rect x="646" y="431" width="5" height="1" fill="#000" stroke="none"/><rect x="646" y="434" width="5" height="1" fill="#000" stroke="none"/><rect x="646" y="436" width="5" height="1" fill="#000" stroke="none"/><rect x="646" y="439" width="5" height="1" fill="#000" stroke="none"/><rect x="646" y="441" width="5" height="1" fill="#000" stroke="none"/><rect x="646" y="444" width="5" height="1" fill="#000" stroke="none"/><rect x="646" y="446" width="5" height="1" fill="#000" stroke="none"/><rect x="646" y="448" width="5" height="1" fill="#000" stroke="none"/><rect x="646" y="451" width="5" height="1" fill="#000" stroke="none"/><rect x="646" y="453" width="5" height="1" fill="#000" stroke="none"/><rect x="646" y="456" width="5" height="1" fill="#000" stroke="none"/><rect x="646" y="458" width="5" height="1" fill="#000" stroke="none"/><rect x="646" y="461" width="5" height="1" fill="#000" stroke="none"/><rect x="646" y="463" width="5" height="1" fill="#000" stroke="none"/><rect x="646" y="466" width="5" height="1" fill="#000" stroke="none"/><rect x="646" y="468" width="5" height="1" fill="#000" stroke="none"/><rect x="646" y="471" width="5" height="1" fill="#000" stroke="none"/><rect x="646" y="473" width="5" height="1" fill="#000" stroke="none"/><rect x="646" y="475" width="5" height="1" fill="#000" stroke="none"/><rect x="646" y="478" width="5" height="1" fill="#000" stroke="none"/><rect x="646" y="480" width="5" height="1" fill="#000" stroke="none"/><rect x="646" y="483" width="5" height="1" fill="#000" stroke="none"/><rect x="646" y="485" width="5" height="1" fill="#000" stroke="none"/><rect x="646" y="488" width="5" height="1" fill="#000" stroke="none"/><rect x="646" y="490" width="5" height="1" fill="#000" stroke="none"/><rect x="646" y="493" width="5" height="1" fill="#000" stroke="none"/><rect x="646" y="495" width="5" height="1" fill="#000" stroke="none"/><rect x="646" y="497" width="5" height="1" fill="#000" stroke="none"/><rect x="646" y="500" width="5" height="1" fill="#000" stroke="none"/><rect x="646" y="502" width="5" height="1" fill="#000" stroke="none"/><rect x="646" y="505" width="5" height="1" fill="#000" stroke="none"/><rect x="646" y="507" width="5" height="1" fill="#000" stroke="none"/><rect x="646" y="510" width="5" height="1" fill="#000" stroke="none"/><rect x="646" y="512" width="5" height="1" fill="#000" stroke="none"/><rect x="646" y="515" width="5" height="1" fill="#000" stroke="none"/><rect x="646" y="517" width="5" height="1" fill="#000" stroke="none"/><rect x="646" y="520" width="5" height="1" fill="#000" stroke="none"/><rect x="646" y="522" width="5" height="1" fill="#000" stroke="none"/><rect x="646" y="524" width="5" height="1" fill="#000" stroke="none"/><rect x="646" y="527" width="5" height="1" fill="#000" stroke="none"/><rect x="646" y="529" width="5" height="1" fill="#000" stroke="none"/><rect x="646" y="532" width="5" height="1" fill="#000" stroke="none"/><rect x="646" y="534" width="5" height="1" fill="#000" stroke="none"/><rect x="646" y="537" width="5" height="1" fill="#000" stroke="none"/><path d="M433.0 301.0 L433.0 316.5 L516.8 400.3 L516.8 407.0"/><path d="M439.0 301.0 L439.0 319.3 L519.3 399.6 L519.3 407.0"/><path d="M445.0 301.0 L445.0 322.1 L521.9 398.9 L521.9 407.0"/><path d="M451.0 301.0 L451.0 324.8 L524.4 398.2 L524.4 407.0"/><path d="M457.0 301.0 L457.0 327.6 L526.9 397.5 L526.9 407.0"/><path d="M463.0 301.0 L463.0 330.3 L529.4 396.7 L529.4 407.0"/><path d="M469.0 301.0 L469.0 333.1 L531.9 396.0 L531.9 407.0"/><path d="M475.0 301.0 L475.0 335.9 L534.5 395.3 L534.5 407.0"/><path d="M481.0 301.0 L481.0 338.6 L537.0 394.6 L537.0 407.0"/><path d="M487.0 301.0 L487.0 341.4 L539.5 393.9 L539.5 407.0"/><path d="M493.0 301.0 L493.0 344.1 L542.0 393.1 L542.0 407.0"/><path d="M499.0 301.0 L499.0 346.9 L544.5 392.4 L544.5 407.0"/><path d="M505.0 301.0 L505.0 349.6 L547.0 391.7 L547.0 407.0"/><path d="M511.0 301.0 L511.0 352.4 L549.6 391.0 L549.6 407.0"/><path d="M523.0 301.0 L523.0 357.9 L554.6 389.5 L554.6 407.0"/><path d="M529.0 301.0 L529.0 360.7 L557.1 388.8 L557.1 407.0"/><path d="M541.0 301.0 L541.0 366.2 L562.2 387.4 L562.2 407.0"/><path d="M547.0 301.0 L547.0 369.0 L564.7 386.7 L564.7 407.0"/><path d="M553.0 301.0 L553.0 371.7 L567.2 385.9 L567.2 407.0"/><path d="M559.0 301.0 L559.0 374.5 L569.7 385.2 L569.7 407.0"/><path d="M565.0 301.0 L565.0 377.2 L572.2 384.5 L572.2 407.0"/><path d="M571.0 301.0 L571.0 380.0 L574.8 383.8 L574.8 407.0"/><path d="M577.0 301.0 L577.0 382.8 L577.3 383.1 L577.3 407.0"/><path d="M583.0 301.0 L583.0 380.5 L579.8 383.7 L579.8 407.0"/><path d="M589.0 301.0 L589.0 377.7 L582.3 384.4 L582.3 407.0"/><path d="M595.0 301.0 L595.0 374.9 L584.9 385.1 L584.9 407.0"/><path d="M601.0 301.0 L601.0 372.2 L587.4 385.8 L587.4 407.0"/><path d="M607.0 301.0 L607.0 369.4 L589.9 386.5 L589.9 407.0"/><path d="M613.0 301.0 L613.0 366.7 L592.4 387.3 L592.4 407.0"/><path d="M619.0 301.0 L619.0 363.9 L594.9 388.0 L594.9 407.0"/><path d="M637.0 301.0 L637.0 355.6 L602.5 390.1 L602.5 407.0"/><path d="M643.0 301.0 L643.0 352.9 L605.0 390.9 L605.0 407.0"/><path d="M649.0 301.0 L649.0 350.1 L607.5 391.6 L607.5 407.0"/><path d="M655.0 301.0 L655.0 347.4 L610.0 392.3 L610.0 407.0"/><path d="M661.0 301.0 L661.0 344.6 L612.6 393.0 L612.6 407.0"/><path d="M667.0 301.0 L667.0 341.8 L615.1 393.7 L615.1 407.0"/><path d="M673.0 301.0 L673.0 339.1 L617.6 394.5 L617.6 407.0"/><path d="M679.0 301.0 L679.0 336.3 L620.1 395.2 L620.1 407.0"/><path d="M685.0 301.0 L685.0 333.6 L622.6 395.9 L622.6 407.0"/><path d="M691.0 301.0 L691.0 330.8 L625.2 396.6 L625.2 407.0"/><path d="M697.0 301.0 L697.0 328.0 L627.7 397.3 L627.7 407.0"/><path d="M703.0 301.0 L703.0 325.3 L630.2 398.1 L630.2 407.0"/><path d="M709.0 301.0 L709.0 322.5 L632.7 398.8 L632.7 407.0"/><path d="M715.0 301.0 L715.0 319.8 L635.2 399.5 L635.2 407.0"/><path d="M721.0 301.0 L721.0 317.0 L637.8 400.2 L637.8 407.0"/><path d="M727.0 301.0 L727.0 314.2 L640.3 400.9 L640.3 407.0"/><path d="M433.6 647.5 L433.6 642.7 L516.0 560.3 L516.0 555.0"/><path d="M439.6 647.5 L439.6 640.4 L518.0 562.0 L518.0 555.0"/><path d="M445.5 647.5 L445.5 638.2 L519.9 563.7 L519.9 555.0"/><path d="M451.5 647.5 L451.5 635.9 L521.9 565.5 L521.9 555.0"/><path d="M457.4 647.5 L457.4 633.6 L523.9 567.2 L523.9 555.0"/><path d="M463.4 647.5 L463.4 631.4 L525.9 568.9 L525.9 555.0"/><path d="M469.3 647.5 L469.3 629.1 L527.8 570.6 L527.8 555.0"/><path d="M475.3 647.5 L475.3 626.8 L529.8 572.4 L529.8 555.0"/><path d="M481.2 647.5 L481.2 624.6 L531.7 574.1 L531.7 555.0"/><path d="M487.2 647.5 L487.2 622.3 L533.7 575.8 L533.7 555.0"/><path d="M493.1 647.5 L493.1 620.1 L535.7 577.5 L535.7 555.0"/><path d="M499.1 647.5 L499.1 617.8 L537.6 579.3 L537.6 555.0"/><path d="M505.0 647.5 L505.0 615.5 L539.6 581.0 L539.6 555.0"/><path d="M511.0 647.5 L511.0 613.3 L541.6 582.7 L541.6 555.0"/><path d="M516.9 647.5 L516.9 611.0 L543.5 584.4 L543.5 555.0"/><path d="M522.9 647.5 L522.9 608.7 L545.5 586.2 L545.5 555.0"/><path d="M528.8 647.5 L528.8 606.5 L547.4 587.9 L547.4 555.0"/><path d="M534.8 647.5 L534.8 604.2 L549.4 589.6 L549.4 555.0"/><path d="M540.7 647.5 L540.7 602.0 L551.4 591.3 L551.4 555.0"/><path d="M546.7 647.5 L546.7 599.7 L553.3 593.1 L553.3 555.0"/><path d="M552.6 647.5 L552.6 597.5 L555.3 594.8 L555.3 555.0"/><path d="M558.6 647.5 L558.6 642.0 L557.0 640.4 L557.0 555.0"/><path d="M564.5 647.5 L564.5 642.0 L559.9 637.4 L559.9 555.0"/><path d="M570.5 647.5 L570.5 642.0 L562.8 634.3 L562.8 555.0"/><path d="M576.4 647.5 L576.4 642.0 L565.7 631.3 L565.7 555.0"/><path d="M582.4 647.5 L582.4 642.0 L568.6 628.2 L568.6 555.0"/><path d="M588.3 647.5 L588.3 642.0 L571.5 625.2 L571.5 555.0"/><path d="M594.3 647.5 L594.3 642.0 L574.4 622.1 L574.4 555.0"/><path d="M600.2 647.5 L600.2 642.0 L577.3 619.1 L577.3 555.0"/><path d="M606.2 647.5 L606.2 642.0 L580.2 616.0 L580.2 555.0"/><path d="M612.1 647.5 L612.1 642.0 L583.1 613.0 L583.1 555.0"/><path d="M618.1 647.5 L618.1 642.0 L586.0 609.9 L586.0 555.0"/><path d="M624.0 647.5 L624.0 642.0 L588.9 606.9 L588.9 555.0"/><path d="M630.0 647.5 L630.0 642.0 L591.8 603.8 L591.8 555.0"/><path d="M635.9 647.5 L635.9 642.0 L594.7 600.8 L594.7 555.0"/><path d="M641.9 647.5 L641.9 642.0 L597.6 597.7 L597.6 555.0"/><path d="M647.8 647.5 L647.8 642.0 L600.5 594.7 L600.5 555.0"/><path d="M653.8 647.5 L653.8 642.0 L603.4 591.6 L603.4 555.0"/><path d="M665.7 647.5 L665.7 617.2 L636.5 588.0 L636.5 588.0 L614.0 565.5 L614.0 555.0"/><path d="M671.6 647.5 L671.6 618.8 L639.0 586.2 L639.0 586.2 L616.4 563.6 L616.4 555.0"/><path d="M677.6 647.5 L677.6 620.5 L641.5 584.4 L641.5 584.4 L618.8 561.7 L618.8 555.0"/><path d="M683.5 647.5 L683.5 622.2 L643.9 582.6 L643.9 582.6 L621.2 559.9 L621.2 555.0"/><path d="M689.5 647.5 L689.5 623.9 L646.4 580.8 L646.4 580.8 L623.6 558.0 L623.6 555.0"/><path d="M695.4 647.5 L695.4 625.5 L648.9 579.0 L647.0 579.0 L626.0 558.0 L626.0 555.0"/><path d="M701.4 647.5 L701.4 627.2 L651.4 577.2 L647.6 577.2 L628.4 558.0 L628.4 555.0"/><path d="M707.3 647.5 L707.3 628.8 L653.9 575.4 L648.2 575.4 L630.8 558.0 L630.8 555.0"/><path d="M713.3 647.5 L713.3 630.5 L656.4 573.6 L648.8 573.6 L633.2 558.0 L633.2 555.0"/><path d="M719.2 647.5 L719.2 632.2 L658.8 571.8 L649.4 571.8 L635.6 558.0 L635.6 555.0"/><path d="M725.2 647.5 L725.2 633.9 L661.3 570.0 L650.0 570.0 L638.0 558.0 L638.0 555.0"/><path d="M380.0 334.5 L411.4 334.5 L496.4 419.5 L503.0 419.5"/><path d="M380.0 340.5 L413.8 340.5 L495.3 422.0 L503.0 422.0"/><path d="M380.0 346.4 L416.2 346.4 L494.2 424.5 L503.0 424.5"/><path d="M380.0 352.4 L418.6 352.4 L493.1 427.0 L503.0 427.0"/><path d="M380.0 364.4 L423.3 364.4 L491.0 432.0 L503.0 432.0"/><path d="M380.0 370.3 L425.7 370.3 L489.9 434.5 L503.0 434.5"/><path d="M380.0 376.3 L428.1 376.3 L488.8 437.0 L503.0 437.0"/><path d="M380.0 382.2 L430.5 382.2 L487.8 439.5 L503.0 439.5"/><path d="M380.0 388.2 L432.9 388.2 L486.7 442.0 L503.0 442.0"/><path d="M380.0 394.1 L435.3 394.1 L485.6 444.5 L503.0 444.5"/><path d="M380.0 400.1 L437.7 400.1 L484.6 447.0 L503.0 447.0"/><path d="M380.0 412.1 L442.4 412.1 L482.4 452.1 L503.0 452.1"/><path d="M380.0 418.0 L444.8 418.0 L481.3 454.5 L503.0 454.5"/><path d="M380.0 424.0 L447.2 424.0 L480.3 457.1 L503.0 457.1"/><path d="M380.0 429.9 L449.6 429.9 L479.2 459.6 L503.0 459.6"/><path d="M380.0 435.9 L452.0 435.9 L478.1 462.1 L503.0 462.1"/><path d="M380.0 441.9 L454.3 441.9 L477.0 464.6 L503.0 464.6"/><path d="M380.0 447.9 L456.7 447.9 L476.0 467.1 L503.0 467.1"/><path d="M380.0 459.8 L461.5 459.8 L473.8 472.1 L503.0 472.1"/><path d="M380.0 465.7 L463.9 465.7 L472.7 474.6 L503.0 474.6"/><path d="M380.0 471.7 L466.3 471.7 L471.7 477.1 L503.0 477.1"/><path d="M380.0 477.7 L468.7 477.7 L470.6 479.6 L503.0 479.6"/><path d="M380.0 483.7 L468.9 483.7 L470.5 482.1 L503.0 482.1"/><path d="M380.0 489.6 L466.6 489.6 L471.5 484.6 L503.0 484.6"/><path d="M380.0 495.6 L464.2 495.6 L472.6 487.1 L503.0 487.1"/><path d="M380.0 507.5 L459.4 507.5 L474.8 492.1 L503.0 492.1"/><path d="M380.0 513.5 L457.0 513.5 L475.8 494.6 L503.0 494.6"/><path d="M380.0 519.5 L454.6 519.5 L476.9 497.1 L503.0 497.1"/><path d="M380.0 525.4 L452.2 525.4 L478.0 499.6 L503.0 499.6"/><path d="M380.0 531.4 L449.8 531.4 L479.1 502.2 L503.0 502.2"/><path d="M380.0 537.3 L447.5 537.3 L480.1 504.7 L503.0 504.7"/><path d="M380.0 543.3 L445.1 543.3 L481.2 507.2 L503.0 507.2"/><path d="M380.0 549.2 L442.7 549.2 L482.3 509.7 L503.0 509.7"/><path d="M380.0 555.2 L440.3 555.2 L483.4 512.2 L503.0 512.2"/><path d="M380.0 561.2 L437.9 561.2 L484.4 514.7 L503.0 514.7"/><path d="M380.0 567.2 L435.5 567.2 L485.5 517.2 L503.0 517.2"/><path d="M380.0 573.1 L433.2 573.1 L486.6 519.7 L503.0 519.7"/><path d="M380.0 579.1 L430.8 579.1 L487.7 522.2 L503.0 522.2"/><path d="M380.0 585.0 L428.4 585.0 L488.7 524.7 L503.0 524.7"/><path d="M380.0 591.0 L426.0 591.0 L489.8 527.2 L503.0 527.2"/><path d="M380.0 597.0 L423.6 597.0 L490.9 529.7 L503.0 529.7"/><path d="M380.0 603.0 L421.2 603.0 L492.0 532.2 L503.0 532.2"/><path d="M380.0 608.9 L418.8 608.9 L493.0 534.7 L503.0 534.7"/><path d="M380.0 614.9 L416.4 614.9 L494.1 537.2 L503.0 537.2"/><path d="M380.0 620.8 L414.1 620.8 L495.2 539.7 L503.0 539.7"/><path d="M380.0 626.8 L411.7 626.8 L496.2 542.2 L503.0 542.2"/><path d="M780.0 333.9 L743.4 333.9 L658.1 419.2 L652.0 419.2"/><path d="M780.0 339.9 L741.0 339.9 L659.2 421.8 L652.0 421.8"/><path d="M780.0 345.9 L738.7 345.9 L660.3 424.2 L652.0 424.2"/><path d="M780.0 351.9 L736.4 351.9 L661.5 426.8 L652.0 426.8"/><path d="M780.0 357.8 L734.1 357.8 L662.6 429.3 L652.0 429.3"/><path d="M780.0 363.8 L731.7 363.8 L663.7 431.8 L652.0 431.8"/><path d="M780.0 369.7 L729.4 369.7 L664.9 434.3 L652.0 434.3"/><path d="M780.0 375.7 L727.1 375.7 L666.0 436.8 L652.0 436.8"/><path d="M780.0 381.6 L724.7 381.6 L667.1 439.3 L652.0 439.3"/><path d="M780.0 387.6 L722.4 387.6 L668.3 441.8 L652.0 441.8"/><path d="M780.0 393.6 L720.1 393.6 L669.4 444.3 L652.0 444.3"/><path d="M780.0 399.6 L717.8 399.6 L670.5 446.8 L652.0 446.8"/><path d="M780.0 405.5 L715.4 405.5 L671.7 449.3 L652.0 449.3"/><path d="M780.0 417.4 L710.8 417.4 L673.9 454.3 L652.0 454.3"/><path d="M780.0 423.4 L708.4 423.4 L675.1 456.8 L652.0 456.8"/><path d="M780.0 429.4 L706.1 429.4 L676.2 459.3 L652.0 459.3"/><path d="M780.0 435.4 L703.8 435.4 L677.3 461.8 L652.0 461.8"/><path d="M780.0 441.3 L701.5 441.3 L678.5 464.3 L652.0 464.3"/><path d="M780.0 447.3 L699.1 447.3 L679.6 466.8 L652.0 466.8"/><path d="M780.0 453.2 L696.8 453.2 L680.7 469.3 L652.0 469.3"/><path d="M780.0 465.2 L692.2 465.2 L683.0 474.3 L652.0 474.3"/><path d="M780.0 471.2 L689.8 471.2 L684.1 476.9 L652.0 476.9"/><path d="M780.0 477.1 L687.5 477.1 L685.3 479.4 L652.0 479.4"/><path d="M780.0 483.1 L686.8 483.1 L685.6 481.9 L652.0 481.9"/><path d="M780.0 489.0 L689.1 489.0 L684.5 484.4 L652.0 484.4"/><path d="M780.0 495.0 L691.5 495.0 L683.3 486.9 L652.0 486.9"/><path d="M780.0 500.9 L693.8 500.9 L682.2 489.4 L652.0 489.4"/><path d="M780.0 506.9 L696.1 506.9 L681.1 491.9 L652.0 491.9"/><path d="M780.0 512.9 L698.4 512.9 L679.9 494.4 L652.0 494.4"/><path d="M780.0 524.8 L703.1 524.8 L677.7 499.4 L652.0 499.4"/><path d="M780.0 530.8 L705.4 530.8 L676.5 501.9 L652.0 501.9"/><path d="M780.0 536.7 L707.7 536.7 L675.4 504.4 L652.0 504.4"/><path d="M780.0 542.7 L710.1 542.7 L674.3 506.9 L652.0 506.9"/><path d="M780.0 548.7 L712.4 548.7 L673.1 509.4 L652.0 509.4"/><path d="M780.0 554.7 L714.7 554.7 L672.0 511.9 L652.0 511.9"/><path d="M780.0 560.6 L717.0 560.6 L670.9 514.4 L652.0 514.4"/><path d="M780.0 566.6 L719.4 566.6 L669.7 517.0 L652.0 517.0"/><path d="M780.0 572.5 L721.7 572.5 L668.6 519.4 L652.0 519.4"/><path d="M780.0 578.5 L724.0 578.5 L667.5 522.0 L652.0 522.0"/><path d="M780.0 584.5 L726.3 584.5 L666.3 524.5 L652.0 524.5"/><path d="M780.0 590.5 L728.7 590.5 L665.2 527.0 L652.0 527.0"/><path d="M780.0 596.4 L731.0 596.4 L664.1 529.5 L652.0 529.5"/><path d="M780.0 602.4 L733.3 602.4 L662.9 532.0 L652.0 532.0"/><path d="M780.0 608.3 L735.7 608.3 L661.8 534.5 L652.0 534.5"/><path d="M780.0 614.3 L738.0 614.3 L660.7 537.0 L652.0 537.0"/><path d="M780.0 620.2 L740.3 620.2 L659.5 539.5 L652.0 539.5"/><path d="M780.0 626.2 L742.6 626.2 L658.4 542.0 L652.0 542.0"/><path d="M427.0 301.0 L427.0 306.0"/><path d="M429.0 291.0 L433.0 296.0 L433.0 301.0"/><path d="M439.0 301.0 L439.0 306.0"/><path d="M441.0 291.0 L445.0 296.0 L445.0 301.0"/><path d="M451.0 301.0 L451.0 306.0"/><path d="M453.0 291.0 L457.0 296.0 L457.0 301.0"/><path d="M463.0 301.0 L463.0 306.0"/><path d="M465.0 291.0 L469.0 296.0 L469.0 301.0"/><path d="M475.0 301.0 L475.0 306.0"/><path d="M477.0 291.0 L481.0 296.0 L481.0 301.0"/><path d="M487.0 301.0 L487.0 306.0"/><path d="M489.0 291.0 L493.0 296.0 L493.0 301.0"/><path d="M499.0 301.0 L499.0 306.0"/><path d="M501.0 291.0 L505.0 296.0 L505.0 301.0"/><path d="M511.0 301.0 L511.0 306.0"/><path d="M513.0 291.0 L517.0 296.0 L517.0 301.0"/><path d="M523.0 301.0 L523.0 306.0"/><path d="M525.0 291.0 L529.0 296.0 L529.0 301.0"/><path d="M535.0 301.0 L535.0 306.0"/><path d="M537.0 291.0 L541.0 296.0 L541.0 301.0"/><path d="M547.0 301.0 L547.0 306.0"/><path d="M549.0 291.0 L553.0 296.0 L553.0 301.0"/><path d="M559.0 301.0 L559.0 306.0"/><path d="M561.0 291.0 L565.0 296.0 L565.0 301.0"/><path d="M571.0 301.0 L571.0 306.0"/><path d="M573.0 291.0 L577.0 296.0 L577.0 301.0"/><path d="M583.0 301.0 L583.0 306.0"/><path d="M585.0 291.0 L589.0 296.0 L589.0 301.0"/><path d="M595.0 301.0 L595.0 306.0"/><path d="M597.0 291.0 L601.0 296.0 L601.0 301.0"/><path d="M607.0 301.0 L607.0 306.0"/><path d="M609.0 291.0 L613.0 296.0 L613.0 301.0"/><path d="M619.0 301.0 L619.0 306.0"/><path d="M621.0 291.0 L625.0 296.0 L625.0 301.0"/><path d="M631.0 301.0 L631.0 306.0"/><path d="M633.0 291.0 L637.0 296.0 L637.0 301.0"/><path d="M643.0 301.0 L643.0 306.0"/><path d="M645.0 291.0 L649.0 296.0 L649.0 301.0"/><path d="M655.0 301.0 L655.0 306.0"/><path d="M657.0 291.0 L661.0 296.0 L661.0 301.0"/><path d="M667.0 301.0 L667.0 306.0"/><path d="M669.0 291.0 L673.0 296.0 L673.0 301.0"/><path d="M679.0 301.0 L679.0 306.0"/><path d="M681.0 291.0 L685.0 296.0 L685.0 301.0"/><path d="M691.0 301.0 L691.0 306.0"/><path d="M693.0 291.0 L697.0 296.0 L697.0 301.0"/><path d="M703.0 301.0 L703.0 306.0"/><path d="M705.0 291.0 L709.0 296.0 L709.0 301.0"/><path d="M715.0 301.0 L715.0 306.0"/><path d="M717.0 291.0 L721.0 296.0 L721.0 301.0"/><path d="M727.0 301.0 L727.0 306.0"/><path d="M439.6 647.5 L439.6 653.0 L436.6 657.0"/><path d="M451.5 647.5 L451.5 653.0 L448.5 657.0"/><path d="M463.4 647.5 L463.4 653.0 L460.4 657.0"/><path d="M475.3 647.5 L475.3 653.0 L472.3 657.0"/><path d="M487.2 647.5 L487.2 653.0 L484.2 657.0"/><path d="M499.1 647.5 L499.1 653.0 L496.1 657.0"/><path d="M511.0 647.5 L511.0 653.0 L508.0 657.0"/><path d="M522.9 647.5 L522.9 653.0 L519.9 657.0"/><path d="M534.8 647.5 L534.8 653.0 L531.8 657.0"/><path d="M546.7 647.5 L546.7 653.0 L543.7 657.0"/><path d="M558.6 647.5 L558.6 653.0 L555.6 657.0"/><path d="M570.5 647.5 L570.5 653.0 L567.5 657.0"/><path d="M582.4 647.5 L582.4 653.0 L579.4 657.0"/><path d="M594.3 647.5 L594.3 653.0 L591.3 657.0"/><path d="M606.2 647.5 L606.2 653.0 L603.2 657.0"/><path d="M618.1 647.5 L618.1 653.0 L615.1 657.0"/><path d="M630.0 647.5 L630.0 653.0 L627.0 657.0"/><path d="M641.9 647.5 L641.9 653.0 L638.9 657.0"/><path d="M653.8 647.5 L653.8 653.0 L650.8 657.0"/><path d="M665.7 647.5 L665.7 653.0 L662.7 657.0"/><path d="M677.6 647.5 L677.6 653.0 L674.6 657.0"/><path d="M689.5 647.5 L689.5 653.0 L686.5 657.0"/><path d="M701.4 647.5 L701.4 653.0 L698.4 657.0"/><path d="M713.3 647.5 L713.3 653.0 L710.3 657.0"/><path d="M725.2 647.5 L725.2 653.0 L722.2 657.0"/><path d="M365.0 349.4 L373.5 340.4"/><path d="M365.0 361.4 L373.5 352.4"/><path d="M365.0 373.3 L373.5 364.3"/><path d="M365.0 385.2 L373.5 376.2"/><path d="M365.0 397.1 L373.5 388.1"/><path d="M365.0 409.1 L373.5 400.1"/><path d="M365.0 421.0 L373.5 412.0"/><path d="M365.0 432.9 L373.5 423.9"/><path d="M365.0 444.9 L373.5 435.9"/><path d="M365.0 456.8 L373.5 447.8"/><path d="M365.0 468.7 L373.5 459.7"/><path d="M365.0 480.7 L373.5 471.7"/><path d="M365.0 492.6 L373.5 483.6"/><path d="M365.0 504.5 L373.5 495.5"/><path d="M365.0 516.5 L373.5 507.5"/><path d="M365.0 528.4 L373.5 519.4"/><path d="M365.0 540.3 L373.5 531.3"/><path d="M365.0 552.2 L373.5 543.2"/><path d="M365.0 564.2 L373.5 555.2"/><path d="M365.0 576.1 L373.5 567.1"/><path d="M365.0 588.0 L373.5 579.0"/><path d="M365.0 600.0 L373.5 591.0"/><path d="M365.0 611.9 L373.5 602.9"/><path d="M365.0 623.8 L373.5 614.8"/><path d="M365.0 635.8 L373.5 626.8"/><path d="M794.0 336.9 L786.0 345.9"/><path d="M794.0 348.9 L786.0 357.9"/><path d="M794.0 360.8 L786.0 369.8"/><path d="M794.0 372.7 L786.0 381.7"/><path d="M794.0 384.6 L786.0 393.6"/><path d="M794.0 396.6 L786.0 405.6"/><path d="M794.0 408.5 L786.0 417.5"/><path d="M794.0 420.4 L786.0 429.4"/><path d="M794.0 432.4 L786.0 441.4"/><path d="M794.0 444.3 L786.0 453.3"/><path d="M794.0 456.2 L786.0 465.2"/><path d="M794.0 468.2 L786.0 477.2"/><path d="M794.0 480.1 L786.0 489.1"/><path d="M794.0 492.0 L786.0 501.0"/><path d="M794.0 503.9 L786.0 513.0"/><path d="M794.0 515.9 L786.0 524.9"/><path d="M794.0 527.8 L786.0 536.8"/><path d="M794.0 539.7 L786.0 548.7"/><path d="M794.0 551.7 L786.0 560.7"/><path d="M794.0 563.6 L786.0 572.6"/><path d="M794.0 575.5 L786.0 584.5"/><path d="M794.0 587.5 L786.0 596.5"/><path d="M794.0 599.4 L786.0 608.4"/><path d="M794.0 611.3 L786.0 620.3"/><path d="M320.5 236.0 L320.5 185.0 L328.5 176.5 L364.0 176.5"/><path d="M364.5 174.5H366.5L368.5 176.5L366.5 178.5H364.5L362.5 176.5Z"/><ellipse cx="348" cy="185.5" rx="4.5" ry="4"/><ellipse cx="348" cy="198" rx="4.5" ry="4"/><path d="M348.5 189.0 L348.5 194.0"/><ellipse cx="377" cy="183.5" rx="4.5" ry="4"/><ellipse cx="377" cy="199" rx="4.5" ry="4"/><path d="M377.5 187.0 L377.5 195.0"/><path d="M345.0 201.0 L336.5 210.0 L336.5 236.0"/><rect x="317.0" y="232.5" width="7" height="9"/><path d="M318.5 233.0 L318.5 241.0"/><path d="M322.5 233.0 L322.5 241.0"/><path d="M317.5 237.0 L323.5 237.0"/><rect x="333.0" y="232.5" width="7" height="9"/><path d="M334.5 233.0 L334.5 241.0"/><path d="M338.5 233.0 L338.5 241.0"/><path d="M333.5 237.0 L339.5 237.0"/><ellipse cx="356" cy="213.5" rx="5" ry="4"/><ellipse cx="369" cy="213.5" rx="5" ry="4"/><path d="M351.0 213.5 L374.0 213.5"/><rect x="357.0" y="231.0" width="8" height="8"/><ellipse cx="374" cy="235.5" rx="5" ry="4.5"/><ellipse cx="386" cy="235.5" rx="5" ry="4.5"/><ellipse cx="398" cy="235.5" rx="5" ry="4.5"/><ellipse cx="410" cy="235.5" rx="5" ry="4.5"/><path d="M407.0 239.0 L413.0 232.0"/><path d="M413.0 232.0 L416.0 229.5 L430.0 229.5"/><ellipse cx="434" cy="217.5" rx="5" ry="4.5"/><ellipse cx="452" cy="217.5" rx="5" ry="4.5"/><rect x="429.5" y="225.5" width="8" height="8"/><rect x="448.5" y="225.5" width="8" height="8"/><path d="M433.5 234.0 L433.5 258.0 L439.5 264.5 L480.0 264.5"/><path d="M452.5 234.0 L452.5 252.0 L458.5 258.5 L470.0 258.5"/><path d="M457.5 256.5H459.5L461.5 258.5L459.5 260.5H457.5L455.5 258.5Z"/><ellipse cx="324" cy="280" rx="4.5" ry="4"/><ellipse cx="324" cy="292" rx="4.5" ry="4"/><rect x="320.0" y="300.0" width="8" height="8"/><path d="M408.5 292.5H410.5L412.5 294.5L410.5 296.5H408.5L406.5 294.5Z"/><ellipse cx="422.7" cy="137.3" rx="7" ry="6.5"/><ellipse cx="454.5" cy="143.3" rx="7" ry="6.5"/><ellipse cx="476" cy="143.3" rx="7" ry="6.5"/><ellipse cx="498" cy="143.3" rx="7" ry="6.5"/><ellipse cx="529.6" cy="137.3" rx="7" ry="6.5"/><ellipse cx="422.7" cy="182.4" rx="7" ry="6.5"/><ellipse cx="454.5" cy="176.4" rx="7" ry="6.5"/><ellipse cx="476" cy="176.4" rx="7" ry="6.5"/><ellipse cx="498" cy="176.4" rx="7" ry="6.5"/><ellipse cx="529.6" cy="182.4" rx="7" ry="6.5"/><path d="M475.5 221.5H477.5L479.5 223.5L477.5 225.5H475.5L473.5 223.5Z"/><rect x="472.0" y="226.8" width="6" height="6"/><path d="M480.5 221.5H482.5L484.5 223.5L482.5 225.5H480.5L478.5 223.5Z"/><path d="M481.5 227.5H483.5L485.5 229.5L483.5 231.5H481.5L479.5 229.5Z"/><path d="M486.5 221.5H488.5L490.5 223.5L488.5 225.5H486.5L484.5 223.5Z"/><path d="M486.5 227.5H488.5L490.5 229.5L488.5 231.5H486.5L484.5 229.5Z"/><path d="M492.5 221.5H494.5L496.5 223.5L494.5 225.5H492.5L490.5 223.5Z"/><path d="M492.5 227.5H494.5L496.5 229.5L494.5 231.5H492.5L490.5 229.5Z"/><path d="M498.5 221.5H500.5L502.5 223.5L500.5 225.5H498.5L496.5 223.5Z"/><path d="M498.5 227.5H500.5L502.5 229.5L500.5 231.5H498.5L496.5 229.5Z"/><path d="M504.5 221.5H506.5L508.5 223.5L506.5 225.5H504.5L502.5 223.5Z"/><path d="M504.5 227.5H506.5L508.5 229.5L506.5 231.5H504.5L502.5 229.5Z"/><path d="M510.5 221.5H512.5L514.5 223.5L512.5 225.5H510.5L508.5 223.5Z"/><path d="M510.5 227.5H512.5L514.5 229.5L512.5 231.5H510.5L508.5 229.5Z"/><path d="M516.5 221.5H518.5L520.5 223.5L518.5 225.5H516.5L514.5 223.5Z"/><path d="M516.5 227.5H518.5L520.5 229.5L518.5 231.5H516.5L514.5 229.5Z"/><path d="M522.5 221.5H524.5L526.5 223.5L524.5 225.5H522.5L520.5 223.5Z"/><path d="M522.5 227.5H524.5L526.5 229.5L524.5 231.5H522.5L520.5 229.5Z"/><path d="M528.5 221.5H530.5L532.5 223.5L530.5 225.5H528.5L526.5 223.5Z"/><path d="M528.5 227.5H530.5L532.5 229.5L530.5 231.5H528.5L526.5 229.5Z"/><path d="M534.5 221.5H536.5L538.5 223.5L536.5 225.5H534.5L532.5 223.5Z"/><path d="M534.5 227.5H536.5L538.5 229.5L536.5 231.5H534.5L532.5 229.5Z"/><path d="M540.5 221.5H542.5L544.5 223.5L542.5 225.5H540.5L538.5 223.5Z"/><path d="M540.5 227.5H542.5L544.5 229.5L542.5 231.5H540.5L538.5 229.5Z"/><path d="M546.5 221.5H548.5L550.5 223.5L548.5 225.5H546.5L544.5 223.5Z"/><path d="M546.5 227.5H548.5L550.5 229.5L548.5 231.5H546.5L544.5 229.5Z"/><ellipse cx="595.0" cy="214.5" rx="5.5" ry="4.5"/><rect x="591.0" y="222.2" width="8" height="8"/><ellipse cx="606.9" cy="214.5" rx="5.5" ry="4.5"/><ellipse cx="606.9" cy="226.2" rx="5.5" ry="4.5"/><ellipse cx="618.8" cy="214.5" rx="5.5" ry="4.5"/><ellipse cx="618.8" cy="226.2" rx="5.5" ry="4.5"/><ellipse cx="630.7" cy="214.5" rx="5.5" ry="4.5"/><ellipse cx="630.7" cy="226.2" rx="5.5" ry="4.5"/><ellipse cx="642.6" cy="214.5" rx="5.5" ry="4.5"/><ellipse cx="642.6" cy="226.2" rx="5.5" ry="4.5"/><ellipse cx="654.5" cy="214.5" rx="5.5" ry="4.5"/><ellipse cx="654.5" cy="226.2" rx="5.5" ry="4.5"/><ellipse cx="666.4" cy="214.5" rx="5.5" ry="4.5"/><ellipse cx="666.4" cy="226.2" rx="5.5" ry="4.5"/><ellipse cx="678.3" cy="214.5" rx="5.5" ry="4.5"/><ellipse cx="678.3" cy="226.2" rx="5.5" ry="4.5"/><ellipse cx="690.2" cy="214.5" rx="5.5" ry="4.5"/><ellipse cx="690.2" cy="226.2" rx="5.5" ry="4.5"/><ellipse cx="702.1" cy="214.5" rx="5.5" ry="4.5"/><ellipse cx="702.1" cy="226.2" rx="5.5" ry="4.5"/><ellipse cx="714.0" cy="214.5" rx="5.5" ry="4.5"/><ellipse cx="714.0" cy="226.2" rx="5.5" ry="4.5"/><ellipse cx="725.9" cy="214.5" rx="5.5" ry="4.5"/><ellipse cx="725.9" cy="226.2" rx="5.5" ry="4.5"/><ellipse cx="737.8" cy="214.5" rx="5.5" ry="4.5"/><ellipse cx="737.8" cy="226.2" rx="5.5" ry="4.5"/><path d="M606.5 203.5H608.5L610.5 205.5L608.5 207.5H606.5L604.5 205.5Z"/><path d="M606.5 233.5H608.5L610.5 235.5L608.5 237.5H606.5L604.5 235.5Z"/><path d="M487.5 223.5 L487.5 203.0 L496.5 194.5 L738.0 194.5 L751.2 208.0 L751.2 273.4 L740.6 285.6 L740.6 301.0"/><path d="M618.6 194.5 L618.6 214.5"/><path d="M492.4 223.5 L492.4 205.5 L499.0 200.5 L611.3 200.5 L614.0 203.0 L614.0 209.0"/><path d="M630.0 210.0 L630.0 206.3 L637.0 200.5 L733.2 200.5 L744.7 211.2 L744.7 248.0 L735.5 257.0"/><path d="M503.8 223.5 L503.8 209.5 L507.3 206.0 L570.4 206.0 L573.4 209.0 L573.4 238.0 L576.9 241.5"/><path d="M510.4 223.5 L510.4 212.0 L513.9 208.5 L567.0 208.5 L570.0 211.5 L570.0 241.0 L573.5 244.5"/><path d="M516.0 223.5 L516.0 214.7 L519.5 211.2 L564.0 211.2 L567.0 214.2 L567.0 244.1 L570.5 247.6"/><path d="M521.8 223.5 L521.8 218.0 L525.3 214.5 L561.4 214.5 L564.4 217.5 L564.4 247.0 L567.9 250.5"/><path d="M528.4 223.5 L528.4 220.5 L531.9 217.0 L558.0 217.0 L561.0 220.0 L561.0 250.0 L564.5 253.5"/><path d="M576.9 241.5 L632.5 241.5 L636.5 237.5 L636.5 209.5"/><path d="M573.5 244.2 L657.0 244.2 L661.0 240.2 L661.0 220.0"/><path d="M570.5 247.2 L668.5 247.2 L672.5 243.2 L672.5 210.0"/><path d="M567.9 250.1 L680.8 250.1 L684.8 246.1 L684.8 220.0"/><path d="M564.5 253.2 L694.7 253.2 L694.7 289.0"/><path d="M637.0 209.5 L643.0 204.0 L647.0 204.0 L652.0 209.5"/><path d="M672.5 210.0 L680.0 202.5 L704.6 202.5 L707.0 205.0 L707.0 289.0"/><path d="M451.5 229.0 L451.5 252.0 L456.4 259.5 L554.6 259.5 L571.0 274.0 L571.0 289.0"/><path d="M457.5 257.5H459.5L461.5 259.5L459.5 261.5H457.5L455.5 259.5Z"/><path d="M439.5 265.2 L548.8 265.2 L558.7 274.0 L558.7 289.0"/><path d="M509.5 263.5H511.5L513.5 265.5L511.5 267.5H509.5L507.5 265.5Z"/><path d="M433.5 234.0 L433.5 259.0 L439.5 265.2"/><rect x="729.5" y="248.5" width="9" height="9"/><rect x="729.5" y="264.0" width="9" height="9"/><path d="M724.2 271.7 L724.2 258.6 L734.0 249.0"/><path d="M724.2 271.7 L712.7 283.2 L712.7 289.0"/><path d="M734.0 268.5 L734.0 283.0 L725.0 292.0"/><rect x="736.5" y="296.5" width="9" height="9"/><rect x="751.5" y="296.5" width="9" height="9"/><path d="M730.0 301.0 L736.0 301.0"/><path d="M761.0 301.0 L771.0 290.0 L771.0 276.0"/><path d="M770.5 273.5H772.5L774.5 275.5L772.5 277.5H770.5L768.5 275.5Z"/><path d="M770.5 305.5H772.5L774.5 307.5L772.5 309.5H770.5L768.5 307.5Z"/><rect x="888.7" y="197.8" width="9" height="10"/><path d="M885.5 201.5H887.5L889.5 203.5L887.5 205.5H885.5L883.5 203.5Z"/><path d="M889.0 203.0 L894.0 203.0"/><rect x="904.7" y="197.8" width="9" height="10"/><path d="M902.5 198.5H904.5L906.5 200.5L904.5 202.5H902.5L900.5 200.5Z"/><path d="M905.0 199.0 L911.0 205.0"/><ellipse cx="901.9" cy="214.4" rx="5" ry="4"/><rect x="855.0" y="217.8" width="8" height="9"/><ellipse cx="872" cy="222.3" rx="5" ry="4"/><ellipse cx="887" cy="223.5" rx="5" ry="4"/><ellipse cx="917.9" cy="223.5" rx="5" ry="4"/><path d="M888.5 231.5H890.5L892.5 233.5L890.5 235.5H888.5L886.5 233.5Z"/><rect x="882.5" y="240.5" width="8" height="8"/><ellipse cx="917.9" cy="244.5" rx="5" ry="4"/><path d="M836.5 204.5H838.5L840.5 206.5L838.5 208.5H836.5L834.5 206.5Z"/><path d="M850.5 201.5H852.5L854.5 203.5L852.5 205.5H850.5L848.5 203.5Z"/><path d="M800.5 219.5H802.5L804.5 221.5L802.5 223.5H800.5L798.5 221.5Z"/><path d="M833.5 219.5H835.5L837.5 221.5L835.5 223.5H833.5L831.5 221.5Z"/><path d="M847.5 251.5H849.5L851.5 253.5L849.5 255.5H847.5L845.5 253.5Z"/><path d="M788.5 257.5H790.5L792.5 259.5L790.5 261.5H788.5L786.5 259.5Z"/><path d="M800.5 256.5H802.5L804.5 258.5L802.5 260.5H800.5L798.5 258.5Z"/><path d="M817.5 256.5H819.5L821.5 258.5L819.5 260.5H817.5L815.5 258.5Z"/><path d="M827.5 256.5H829.5L831.5 258.5L829.5 260.5H827.5L825.5 258.5Z"/><path d="M800.5 268.5H802.5L804.5 270.5L802.5 272.5H800.5L798.5 270.5Z"/><path d="M817.5 268.5H819.5L821.5 270.5L819.5 272.5H817.5L815.5 270.5Z"/><path d="M827.5 268.5H829.5L831.5 270.5L829.5 272.5H827.5L825.5 270.5Z"/><path d="M783.5 274.5H785.5L787.5 276.5L785.5 278.5H783.5L781.5 276.5Z"/><ellipse cx="843.7" cy="269.3" rx="5" ry="4"/><rect x="851.0" y="264.8" width="8" height="9"/><rect x="894.0" y="264.3" width="9" height="10"/><path d="M890.5 267.5H892.5L894.5 269.5L892.5 271.5H890.5L888.5 269.5Z"/><path d="M893.0 269.3 L897.0 269.3"/><path d="M896.0 266.3 L896.0 272.3"/><rect x="910.0" y="264.3" width="9" height="10"/><path d="M910.0 267.3 L919.0 267.3"/><path d="M910.0 271.3 L919.0 271.3"/><ellipse cx="843.7" cy="293.3" rx="5" ry="4"/><rect x="851.0" y="288.8" width="8" height="9"/><rect x="894.0" y="288.3" width="9" height="10"/><path d="M890.5 291.5H892.5L894.5 293.5L892.5 295.5H890.5L888.5 293.5Z"/><path d="M893.0 293.3 L897.0 293.3"/><path d="M896.0 290.3 L896.0 296.3"/><rect x="910.0" y="288.3" width="9" height="10"/><path d="M910.0 291.3 L919.0 291.3"/><path d="M910.0 295.3 L919.0 295.3"/><ellipse cx="843.7" cy="316.4" rx="5" ry="4"/><rect x="851.0" y="311.9" width="8" height="9"/><rect x="894.0" y="311.4" width="9" height="10"/><path d="M890.5 314.5H892.5L894.5 316.5L892.5 318.5H890.5L888.5 316.5Z"/><path d="M893.0 316.4 L897.0 316.4"/><path d="M896.0 313.4 L896.0 319.4"/><rect x="910.0" y="311.4" width="9" height="10"/><path d="M910.0 314.4 L919.0 314.4"/><path d="M910.0 318.4 L919.0 318.4"/><ellipse cx="843.7" cy="339.5" rx="5" ry="4"/><rect x="851.0" y="335.0" width="8" height="9"/><rect x="894.0" y="334.5" width="9" height="10"/><path d="M890.5 337.5H892.5L894.5 339.5L892.5 341.5H890.5L888.5 339.5Z"/><path d="M893.0 339.5 L897.0 339.5"/><path d="M896.0 336.5 L896.0 342.5"/><rect x="910.0" y="334.5" width="9" height="10"/><path d="M910.0 337.5 L919.0 337.5"/><path d="M910.0 341.5 L919.0 341.5"/><ellipse cx="843.7" cy="362.5" rx="5" ry="4"/><rect x="851.0" y="358.0" width="8" height="9"/><rect x="894.0" y="357.5" width="9" height="10"/><path d="M890.5 360.5H892.5L894.5 362.5L892.5 364.5H890.5L888.5 362.5Z"/><path d="M893.0 362.5 L897.0 362.5"/><path d="M896.0 359.5 L896.0 365.5"/><rect x="910.0" y="357.5" width="9" height="10"/><path d="M910.0 360.5 L919.0 360.5"/><path d="M910.0 364.5 L919.0 364.5"/><ellipse cx="843.7" cy="386.2" rx="5" ry="4"/><rect x="851.0" y="381.7" width="8" height="9"/><rect x="894.0" y="381.2" width="9" height="10"/><path d="M890.5 384.5H892.5L894.5 386.5L892.5 388.5H890.5L888.5 386.5Z"/><path d="M893.0 386.2 L897.0 386.2"/><path d="M896.0 383.2 L896.0 389.2"/><rect x="910.0" y="381.2" width="9" height="10"/><path d="M910.0 384.2 L919.0 384.2"/><path d="M910.0 388.2 L919.0 388.2"/><ellipse cx="843.7" cy="409.5" rx="5" ry="4"/><rect x="851.0" y="405.0" width="8" height="9"/><rect x="894.0" y="404.5" width="9" height="10"/><path d="M890.5 407.5H892.5L894.5 409.5L892.5 411.5H890.5L888.5 409.5Z"/><path d="M893.0 409.5 L897.0 409.5"/><path d="M896.0 406.5 L896.0 412.5"/><rect x="910.0" y="404.5" width="9" height="10"/><path d="M910.0 407.5 L919.0 407.5"/><path d="M910.0 411.5 L919.0 411.5"/><ellipse cx="843.7" cy="432.5" rx="5" ry="4"/><rect x="851.0" y="428.0" width="8" height="9"/><rect x="894.0" y="427.5" width="9" height="10"/><path d="M890.5 430.5H892.5L894.5 432.5L892.5 434.5H890.5L888.5 432.5Z"/><path d="M893.0 432.5 L897.0 432.5"/><path d="M896.0 429.5 L896.0 435.5"/><rect x="910.0" y="427.5" width="9" height="10"/><path d="M910.0 430.5 L919.0 430.5"/><path d="M910.0 434.5 L919.0 434.5"/><path d="M914.5 262.0 L914.5 440.0"/><path d="M918.5 395.5H920.5L922.5 397.5L920.5 399.5H918.5L916.5 397.5Z"/><path d="M918.5 303.5H920.5L922.5 305.5L920.5 307.5H918.5L916.5 305.5Z"/><path d="M803.5 305.5H805.5L807.5 307.5L805.5 309.5H803.5L801.5 307.5Z"/><ellipse cx="843.5" cy="465.4" rx="5" ry="4"/><rect x="851.0" y="460.9" width="8" height="9"/><ellipse cx="843.5" cy="513.5" rx="5" ry="4"/><rect x="851.0" y="509.0" width="8" height="9"/><ellipse cx="843.5" cy="560.3" rx="5" ry="4"/><rect x="851.0" y="555.8" width="8" height="9"/><ellipse cx="843.5" cy="608.4" rx="5" ry="4"/><rect x="851.0" y="603.9" width="8" height="9"/><ellipse cx="838.3" cy="634" rx="5" ry="4"/><rect x="846.0" y="629.5" width="8" height="9"/><ellipse cx="907.8" cy="450.2" rx="5" ry="4"/><ellipse cx="892.7" cy="459.9" rx="5" ry="4"/><ellipse cx="924" cy="459.9" rx="5" ry="4"/><path d="M891.5 466.5H893.5L895.5 468.5L893.5 470.5H891.5L889.5 468.5Z"/><path d="M874.5 482.5H876.5L878.5 484.5L876.5 486.5H874.5L872.5 484.5Z"/><rect x="888.5" y="476.0" width="8" height="8"/><ellipse cx="924" cy="480.0" rx="5" ry="4"/><ellipse cx="907.8" cy="497.9" rx="5" ry="4"/><ellipse cx="892.7" cy="507.59999999999997" rx="5" ry="4"/><ellipse cx="924" cy="507.59999999999997" rx="5" ry="4"/><path d="M891.5 513.5H893.5L895.5 515.5L893.5 517.5H891.5L889.5 515.5Z"/><path d="M874.5 530.5H876.5L878.5 532.5L876.5 534.5H874.5L872.5 532.5Z"/><rect x="888.5" y="523.6999999999999" width="8" height="8"/><ellipse cx="924" cy="527.6999999999999" rx="5" ry="4"/><ellipse cx="907.8" cy="545.6" rx="5" ry="4"/><ellipse cx="892.7" cy="555.3000000000001" rx="5" ry="4"/><ellipse cx="924" cy="555.3000000000001" rx="5" ry="4"/><path d="M891.5 561.5H893.5L895.5 563.5L893.5 565.5H891.5L889.5 563.5Z"/><path d="M874.5 578.5H876.5L878.5 580.5L876.5 582.5H874.5L872.5 580.5Z"/><rect x="888.5" y="571.4" width="8" height="8"/><ellipse cx="924" cy="575.4" rx="5" ry="4"/><ellipse cx="907.8" cy="593.3" rx="5" ry="4"/><ellipse cx="892.7" cy="603.0" rx="5" ry="4"/><ellipse cx="924" cy="603.0" rx="5" ry="4"/><path d="M891.5 609.5H893.5L895.5 611.5L893.5 613.5H891.5L889.5 611.5Z"/><path d="M874.5 625.5H876.5L878.5 627.5L876.5 629.5H874.5L872.5 627.5Z"/><rect x="888.5" y="619.0999999999999" width="8" height="8"/><ellipse cx="924" cy="623.0999999999999" rx="5" ry="4"/><path d="M771.0 290.0 L771.0 276.0"/><rect x="853" y="645" width="7.3" height="22" fill="#f88080"/><rect x="853" y="678.7" width="7.3" height="22.3" fill="#f88080"/><rect x="877" y="645" width="7.3" height="22" fill="#f88080"/><rect x="877" y="678.7" width="7.3" height="22.3" fill="#f88080"/><path d="M850.5 654.5H852.5L854.5 656.5L852.5 658.5H850.5L848.5 656.5Z"/><path d="M850.5 688.5H852.5L854.5 690.5L852.5 692.5H850.5L848.5 690.5Z"/><path d="M886.5 654.5H888.5L890.5 656.5L888.5 658.5H886.5L884.5 656.5Z"/><path d="M886.5 688.5H888.5L890.5 690.5L888.5 692.5H886.5L884.5 690.5Z"/><path d="M806.5 645.5H808.5L810.5 647.5L808.5 649.5H806.5L804.5 647.5Z"/><path d="M806.5 663.5H808.5L810.5 665.5L808.5 667.5H806.5L804.5 665.5Z"/><path d="M770.5 664.5H772.5L774.5 666.5L772.5 668.5H770.5L768.5 666.5Z"/><path d="M655.5 560.5H657.5L659.5 562.5L657.5 564.5H655.5L653.5 562.5Z"/><path d="M507.5 408.5H509.5L511.5 410.5L509.5 412.5H507.5L505.5 410.5Z"/><path d="M641.5 408.5H643.5L645.5 410.5L643.5 412.5H641.5L639.5 410.5Z"/><path d="M651.5 409.5H653.5L655.5 411.5L653.5 413.5H651.5L649.5 411.5Z"/><path d="M659.5 409.5H661.5L663.5 411.5L661.5 413.5H659.5L657.5 411.5Z"/><path d="M499.5 415.5H501.5L503.5 417.5L501.5 419.5H499.5L497.5 417.5Z"/><path d="M507.5 415.5H509.5L511.5 417.5L509.5 419.5H507.5L505.5 417.5Z"/><path d="M547.5 417.5H549.5L551.5 419.5L549.5 421.5H547.5L545.5 419.5Z"/><path d="M559.5 417.5H561.5L563.5 419.5L561.5 421.5H559.5L557.5 419.5Z"/><path d="M576.5 417.5H578.5L580.5 419.5L578.5 421.5H576.5L574.5 419.5Z"/><path d="M587.5 417.5H589.5L591.5 419.5L589.5 421.5H587.5L585.5 419.5Z"/><path d="M599.5 417.5H601.5L603.5 419.5L601.5 421.5H599.5L597.5 419.5Z"/><path d="M630.5 418.5H632.5L634.5 420.5L632.5 422.5H630.5L628.5 420.5Z"/><path d="M556.5 426.5H558.5L560.5 428.5L558.5 430.5H556.5L554.5 428.5Z"/><path d="M567.5 426.5H569.5L571.5 428.5L569.5 430.5H567.5L565.5 428.5Z"/><path d="M576.5 426.5H578.5L580.5 428.5L578.5 430.5H576.5L574.5 428.5Z"/><path d="M599.5 425.5H601.5L603.5 427.5L601.5 429.5H599.5L597.5 427.5Z"/><path d="M614.5 425.5H616.5L618.5 427.5L616.5 429.5H614.5L612.5 427.5Z"/><path d="M515.5 430.5H517.5L519.5 432.5L517.5 434.5H515.5L513.5 432.5Z"/><path d="M528.5 430.5H530.5L532.5 432.5L530.5 434.5H528.5L526.5 432.5Z"/><path d="M537.5 429.5H539.5L541.5 431.5L539.5 433.5H537.5L535.5 431.5Z"/><path d="M539.5 445.5H541.5L543.5 447.5L541.5 449.5H539.5L537.5 447.5Z"/><path d="M574.5 441.5H576.5L578.5 443.5L576.5 445.5H574.5L572.5 443.5Z"/><path d="M606.5 444.5H608.5L610.5 446.5L608.5 448.5H606.5L604.5 446.5Z"/><path d="M627.5 435.5H629.5L631.5 437.5L629.5 439.5H627.5L625.5 437.5Z"/><path d="M637.5 436.5H639.5L641.5 438.5L639.5 440.5H637.5L635.5 438.5Z"/><path d="M629.5 442.5H631.5L633.5 444.5L631.5 446.5H629.5L627.5 444.5Z"/><path d="M637.5 448.5H639.5L641.5 450.5L639.5 452.5H637.5L635.5 450.5Z"/><path d="M515.5 449.5H517.5L519.5 451.5L517.5 453.5H515.5L513.5 451.5Z"/><path d="M515.5 459.5H517.5L519.5 461.5L517.5 463.5H515.5L513.5 461.5Z"/><path d="M522.5 459.5H524.5L526.5 461.5L524.5 463.5H522.5L520.5 461.5Z"/><path d="M637.5 460.5H639.5L641.5 462.5L639.5 464.5H637.5L635.5 462.5Z"/><path d="M515.5 469.5H517.5L519.5 471.5L517.5 473.5H515.5L513.5 471.5Z"/><path d="M614.5 474.5H616.5L618.5 476.5L616.5 478.5H614.5L612.5 476.5Z"/><path d="M638.5 473.5H640.5L642.5 475.5L640.5 477.5H638.5L636.5 475.5Z"/><path d="M638.5 479.5H640.5L642.5 481.5L640.5 483.5H638.5L636.5 481.5Z"/><path d="M515.5 483.5H517.5L519.5 485.5L517.5 487.5H515.5L513.5 485.5Z"/><path d="M515.5 492.5H517.5L519.5 494.5L517.5 496.5H515.5L513.5 494.5Z"/><path d="M522.5 492.5H524.5L526.5 494.5L524.5 496.5H522.5L520.5 494.5Z"/><path d="M587.5 494.5H589.5L591.5 496.5L589.5 498.5H587.5L585.5 496.5Z"/><path d="M616.5 491.5H618.5L620.5 493.5L618.5 495.5H616.5L614.5 493.5Z"/><path d="M638.5 499.5H640.5L642.5 501.5L640.5 503.5H638.5L636.5 501.5Z"/><path d="M638.5 505.5H640.5L642.5 507.5L640.5 509.5H638.5L636.5 507.5Z"/><path d="M515.5 508.5H517.5L519.5 510.5L517.5 512.5H515.5L513.5 510.5Z"/><path d="M548.5 502.5H550.5L552.5 504.5L550.5 506.5H548.5L546.5 504.5Z"/><path d="M573.5 500.5H575.5L577.5 502.5L575.5 504.5H573.5L571.5 502.5Z"/><path d="M638.5 516.5H640.5L642.5 518.5L640.5 520.5H638.5L636.5 518.5Z"/><path d="M603.5 517.5H605.5L607.5 519.5L605.5 521.5H603.5L601.5 519.5Z"/><path d="M555.5 524.5H557.5L559.5 526.5L557.5 528.5H555.5L553.5 526.5Z"/><path d="M528.5 536.5H530.5L532.5 538.5L530.5 540.5H528.5L526.5 538.5Z"/><path d="M537.5 536.5H539.5L541.5 538.5L539.5 540.5H537.5L535.5 538.5Z"/><path d="M573.5 532.5H575.5L577.5 534.5L575.5 536.5H573.5L571.5 534.5Z"/><path d="M581.5 532.5H583.5L585.5 534.5L583.5 536.5H581.5L579.5 534.5Z"/><path d="M609.5 530.5H611.5L613.5 532.5L611.5 534.5H609.5L607.5 532.5Z"/><path d="M618.5 530.5H620.5L622.5 532.5L620.5 534.5H618.5L616.5 532.5Z"/><path d="M637.5 532.5H639.5L641.5 534.5L639.5 536.5H637.5L635.5 534.5Z"/><path d="M517.5 540.5H519.5L521.5 542.5L519.5 544.5H517.5L515.5 542.5Z"/><path d="M552.5 540.5H554.5L556.5 542.5L554.5 544.5H552.5L550.5 542.5Z"/><path d="M559.5 540.5H561.5L563.5 542.5L561.5 544.5H559.5L557.5 542.5Z"/><path d="M567.5 540.5H569.5L571.5 542.5L569.5 544.5H567.5L565.5 542.5Z"/><path d="M577.5 540.5H579.5L581.5 542.5L579.5 544.5H577.5L575.5 542.5Z"/><path d="M600.5 540.5H602.5L604.5 542.5L602.5 544.5H600.5L598.5 542.5Z"/><path d="M637.5 540.5H639.5L641.5 542.5L639.5 544.5H637.5L635.5 542.5Z"/><path d="M499.5 545.5H501.5L503.5 547.5L501.5 549.5H499.5L497.5 547.5Z"/><path d="M657.5 560.5H659.5L661.5 562.5L659.5 564.5H657.5L655.5 562.5Z"/><path d="M529.0 435.0 L529.0 537.0"/><path d="M538.0 433.5 L538.0 537.0"/><path d="M575.6 443.3 L588.7 457.5 L588.7 494.0"/><path d="M588.7 476.2 L612.0 476.2"/><path d="M638.2 452.0 L628.5 461.0 L628.5 507.0 L637.0 516.0"/><path d="M646.0 450.0 L634.0 462.0 L634.0 500.0 L640.0 505.0"/><path d="M500.0 411.0 L506.0 411.0"/><path d="M548.6 415.0 L548.6 417.0"/><path d="M560.5 415.0 L560.5 417.0"/><path d="M577.9 415.0 L577.9 417.0"/><path d="M588.7 415.0 L588.7 417.0"/><path d="M600.0 415.0 L600.0 417.0"/><path d="M631.9 415.0 L631.9 417.0"/><path d="M548.6 421.0 L557.6 426.0"/><path d="M588.7 421.0 L577.9 426.0"/><path d="M600.0 421.0 L600.0 425.0"/><path d="M568.9 426.0 L568.9 415.0"/><path d="M516.7 451.9 L511.0 451.9"/><path d="M516.7 471.4 L511.0 471.4"/><path d="M516.7 485.6 L511.0 485.6"/><path d="M516.7 510.4 L511.0 510.4"/><path d="M511.0 445.0 L514.0 452.0 L516.7 461.5"/><path d="M511.0 480.0 L514.0 488.0 L516.7 494.2"/><path d="M518.7 545.0 L518.7 547.0"/><path d="M553.8 545.0 L553.8 547.0"/><path d="M560.5 545.0 L560.5 547.0"/><path d="M568.0 545.0 L568.0 547.0"/><path d="M578.5 545.0 L578.5 547.0"/><path d="M601.0 545.0 L601.0 547.0"/><path d="M638.2 545.0 L638.2 547.0"/><path d="M574.0 536.0 L574.0 541.0"/><path d="M582.0 536.0 L578.5 541.0"/><path d="M610.0 535.0 L610.0 547.0"/><path d="M619.0 535.0 L606.0 547.0"/><text transform="translate(294.5,526) rotate(-90)" font-family="Liberation Mono" font-size="16.5" fill="#f09090" stroke="#000" stroke-width="0.35" shape-rendering="auto">4.950 Between Targets</text><text transform="translate(971.7,470.5) rotate(-90)" font-family="Liberation Mono" font-size="13.6" fill="#f09090" stroke="#000" stroke-width="0.35" shape-rendering="auto">Pin Comp Side</text><text transform="translate(953.7,685) rotate(-90)" font-family="Liberation Mono" font-size="13.8" fill="#f09090" stroke="#000" stroke-width="0.35" shape-rendering="auto">Targets</text><text transform="translate(953.7,593) rotate(-90)" font-family="Liberation Mono" font-size="13.8" fill="#f09090" stroke="#000" stroke-width="0.35" shape-rendering="auto">Crop Marks</text><text transform="translate(971,685) rotate(-90)" font-family="Liberation Mono" font-size="13.8" fill="#f09090" stroke="#000" stroke-width="0.35" shape-rendering="auto">Component Side</text><text transform="translate(988.7,685) rotate(-90)" font-family="Liberation Mono" font-size="13.8" fill="#f09090" stroke="#000" stroke-width="0.35" shape-rendering="auto">Flash Component Side</text><path d="M812 84.5H872M842.5 84V114" stroke="#fff"/></g></svg>
<svg class="a" style="left:0;top:0" width="1100" height="800" viewBox="0 0 1100 800"><defs><linearGradient id="vtr" x1="0" x2="1" y1="0" y2="0"><stop offset="0" stop-color="#eeeef3"/><stop offset="0.3" stop-color="#fafafc"/><stop offset="1" stop-color="#f4f4f8"/></linearGradient><linearGradient id="htr" x1="0" x2="0" y1="0" y2="1"><stop offset="0" stop-color="#eeeef3"/><stop offset="0.3" stop-color="#fafafc"/><stop offset="1" stop-color="#f4f4f8"/></linearGradient><linearGradient id="btn" x1="0" x2="1" y1="0" y2="1"><stop offset="0" stop-color="#ffffff"/><stop offset="0.6" stop-color="#e6e6ee"/><stop offset="1" stop-color="#c8c8d8"/></linearGradient></defs><rect x="1077" y="84" width="17" height="675" fill="url(#vtr)"/><rect x="162" y="759" width="915" height="17" fill="url(#htr)"/><rect x="1077" y="759" width="17" height="18" fill="#e6e6ea"/><rect x="1078.5" y="84.5" width="15" height="16" rx="2" fill="url(#btn)" stroke="#b0b0c0"/><path d="M1082 95L1086 91L1090 95" fill="none" stroke="#2c2c3c" stroke-width="2"/><rect x="1078.5" y="742.5" width="15" height="16" rx="2" fill="url(#btn)" stroke="#b0b0c0"/><path d="M1082 748L1086 752L1090 748" fill="none" stroke="#2c2c3c" stroke-width="2"/><rect x="1078.5" y="369.5" width="15" height="20" rx="2" fill="url(#btn)" stroke="#b0b0c0"/><rect x="1083" y="376" width="6" height="1" fill="#6c6c7c"/><rect x="1083" y="378" width="6" height="1" fill="#6c6c7c"/><rect x="1083" y="380" width="6" height="1" fill="#6c6c7c"/><rect x="1083" y="382" width="6" height="1" fill="#6c6c7c"/><rect x="163.5" y="760.5" width="16" height="15" rx="2" fill="url(#btn)" stroke="#b0b0c0"/><path d="M174 764L170 768L174 772" fill="none" stroke="#2c2c3c" stroke-width="2"/><rect x="1060.5" y="760.5" width="16" height="15" rx="2" fill="url(#btn)" stroke="#b0b0c0"/><path d="M1066 764L1070 768L1066 772" fill="none" stroke="#2c2c3c" stroke-width="2"/><rect x="672.5" y="760.5" width="39" height="15" rx="2" fill="url(#btn)" stroke="#b0b0c0"/><rect x="689" y="765" width="1" height="6" fill="#6c6c7c"/><rect x="691" y="765" width="1" height="6" fill="#6c6c7c"/><rect x="693" y="765" width="1" height="6" fill="#6c6c7c"/><rect x="695" y="765" width="1" height="6" fill="#6c6c7c"/><rect x="3" y="776" width="1094" height="1" fill="#ffffff"/><rect x="3" y="777" width="1094" height="19" fill="#e0dfe3"/><path d="M1057.5 796V780.5H1064.5" fill="none" stroke="#a8a8b0"/><path d="M1058.5 796V781.5" stroke="#fff"/><path d="M1068.5 796V780.5H1075.5" fill="none" stroke="#a8a8b0"/><path d="M1069.5 796V781.5" stroke="#fff"/><path d="M1094 795L1095 793" stroke="#c0c0c8" stroke-width="1.2"/><path d="M1090 795L1095 789" stroke="#c0c0c8" stroke-width="1.2"/><path d="M1086 795L1095 785" stroke="#c0c0c8" stroke-width="1.2"/><rect x="0" y="796" width="1100" height="4" fill="#c4c3d3"/><rect x="0" y="796" width="1100" height="1" fill="#9e9db5"/><rect x="0" y="799" width="1100" height="1" fill="#8d8ba3"/><rect x="1094" y="28" width="6" height="770" fill="#c4c3d3"/><rect x="1096" y="28" width="1" height="770" fill="#f0f0f4"/><rect x="1099" y="0" width="1" height="800" fill="#8d8ba3"/><rect x="0" y="28" width="3" height="770" fill="#c4c3d3"/><rect x="0" y="0" width="1" height="800" fill="#8d8ba3"/><rect x="2" y="28" width="1" height="770" fill="#f0f0f4"/></svg>
<div class="t" style="left:6px;top:783px;font-size:11px;color:#222">Ready</div>
</body></html>
